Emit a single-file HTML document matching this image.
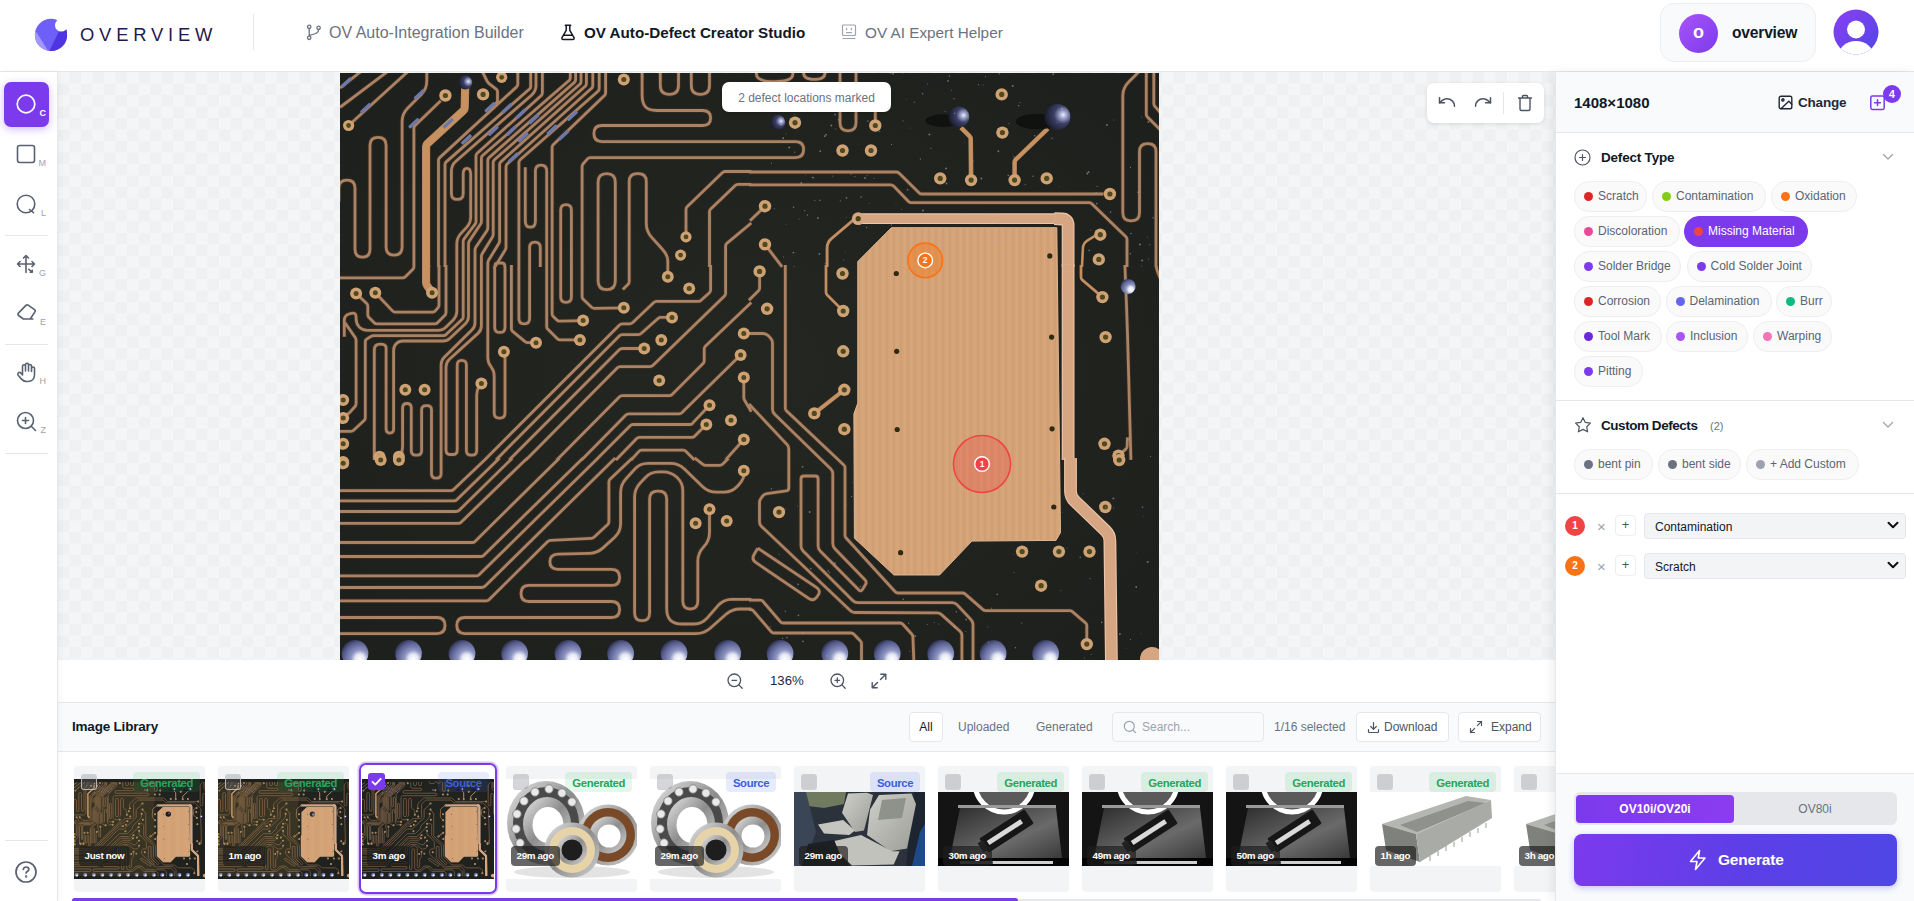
<!DOCTYPE html>
<html lang="en">
<head>
<meta charset="utf-8">
<title>OV Auto-Defect Creator Studio</title>
<style>
*{box-sizing:border-box;margin:0;padding:0}
html,body{width:1914px;height:901px;overflow:hidden;background:#fff;font-family:"Liberation Sans",sans-serif;color:#111827}
.abs{position:absolute}
#app{position:relative;width:1914px;height:901px;overflow:hidden}
/* header */
#hdr{position:absolute;left:0;top:0;width:1914px;height:72px;background:#fff;border-bottom:1px solid #e5e7eb}
.brand{position:absolute;left:80px;top:21px;font-size:18.4px;letter-spacing:4.8px;color:#1e1b4b;font-weight:400;line-height:28px}
.vdiv{position:absolute;left:253px;top:14px;width:1px;height:36px;background:#e5e7eb}
.nav{position:absolute;top:23px;font-size:15.5px;line-height:20px;color:#6b7280;white-space:nowrap}
.nav.act{color:#111827;font-weight:700}
.userpill{position:absolute;left:1660px;top:3px;width:156px;height:59px;border:1px solid #eceef2;border-radius:14px;background:#f9fafb}
.userpill .av{position:absolute;left:18px;top:10px;width:39px;height:39px;border-radius:50%;background:linear-gradient(135deg,#a855f7,#7c3aed);color:#fff;font-weight:700;font-size:18px;text-align:center;line-height:37px}
.userpill .nm{position:absolute;left:71px;top:18px;font-size:15.6px;font-weight:700;color:#111827;line-height:22px;letter-spacing:-.2px}
/* sidebar */
#side{position:absolute;left:0;top:72px;width:58px;height:829px;background:#fff;border-right:1px solid #e5e7eb;box-shadow:2px 0 6px rgba(0,0,0,.04);z-index:2}
.tool{position:absolute;left:4px;width:45px;height:45px;border-radius:7px}
.tool.on{background:#7c3aed;box-shadow:0 2px 8px rgba(124,58,237,.35)}
.tool svg{position:absolute;left:11px;top:11px}
.tool i{position:absolute;font-style:normal;font-size:9px;color:#9ca3af;right:3px;top:26px;line-height:10px}
.tool.on i{color:#fff;font-weight:700}
.sdiv{position:absolute;left:5px;width:43px;height:1px;background:#e5e7eb}
/* canvas */
#canvas{position:absolute;left:58px;top:72px;width:1497px;height:588px;overflow:hidden;background-color:#f4f5f7;
background-image:linear-gradient(45deg,#eff0f2 25%,transparent 25%,transparent 75%,#eff0f2 75%),linear-gradient(45deg,#eff0f2 25%,transparent 25%,transparent 75%,#eff0f2 75%);
background-size:23px 23px;background-position:0 0,11.5px 11.5px}
#pcb{position:absolute;left:282px;top:1px;width:819px;height:587px;display:block}
.note{position:absolute;left:664px;top:10px;width:169px;height:30px;background:#fff;border-radius:7px;font-size:12px;line-height:32px;text-align:center;color:#6b7280;box-shadow:0 1px 3px rgba(0,0,0,.15)}
.hist{position:absolute;left:1369px;top:11px;width:117px;height:40px;background:#fff;border-radius:7px;box-shadow:0 1px 4px rgba(0,0,0,.12)}
/* zoom bar */
#zbar{position:absolute;left:58px;top:660px;width:1497px;height:43px;background:#fff;border-bottom:1px solid #e5e7eb}
/* library */
#libh{position:absolute;left:58px;top:703px;width:1497px;height:49px;background:#f8fafc;border-bottom:1px solid #e5e7eb}
#lib{position:absolute;left:58px;top:752px;width:1497px;height:149px;background:#fff;overflow:hidden}
.lbtn{position:absolute;top:9px;height:30px;border:1px solid #e5e7eb;border-radius:4px;background:#fff;font-size:12px;line-height:28px;color:#4b5563;white-space:nowrap}
.ltxt{position:absolute;top:9px;font-size:12px;line-height:30px;color:#6b7280;white-space:nowrap}
.card{position:absolute;top:14px;width:131.5px;height:126px;background:#f3f4f6;border-radius:4px;overflow:hidden}
.card.cur{background:#fff;border-radius:5px;overflow:visible}
.card .im{position:absolute;left:0;width:132px;overflow:hidden;display:block}
.card .cb{position:absolute;left:7px;top:8px;width:16px;height:16px;border-radius:3px;background:rgba(120,120,125,.3);border:1.5px solid rgba(205,207,212,.8)}
.card .cb.on{background:#7c3aed;border:0;width:17px;height:17px;left:6px;top:7px}
.card .tag{position:absolute;right:5px;top:6px;height:20px;padding:0 7px;border-radius:4px;font-size:11.3px;line-height:22.5px;font-weight:700;letter-spacing:-.35px}
.tag.g{background:rgba(34,197,94,.12);color:#25a55e}
.tag.s{background:rgba(79,110,246,.14);color:#3b5fdb}
.card .tm{position:absolute;left:5px;top:80px;height:20px;padding:0 6px;border-radius:4px;background:rgba(30,30,30,.68);color:#fff;font-size:9.8px;font-weight:700;line-height:20px;white-space:nowrap;letter-spacing:-.35px}
.ring{position:absolute;left:-3px;top:-3px;right:-3px;bottom:-2px;border:2px solid #7c3aed;border-radius:7px;box-shadow:0 0 0 1.5px rgba(124,58,237,.3)}
/* right panel */
#rp{position:absolute;left:1555px;top:72px;width:359px;height:829px;background:#fff;border-left:1px solid #e5e7eb;box-shadow:-3px 0 10px rgba(0,0,0,.07)}
#rph{position:absolute;left:0;top:0;width:358px;height:61px;background:#f8fafc;border-bottom:1px solid #e5e7eb}
.chip{position:absolute;height:31px;border:1px solid #eceef1;border-radius:15px;background:#fafafa;font-size:12px;line-height:29.5px;color:#5b6472;white-space:nowrap;padding-left:23px}
.chip b{position:absolute;left:9px;top:10px;width:9px;height:9px;border-radius:50%}
.chip.on{background:#7c3aed;border-color:#7c3aed;color:#fff}
.sect{position:absolute;left:45px;font-size:13.5px;font-weight:700;color:#111827;line-height:18px;white-space:nowrap;letter-spacing:-.2px}
.hline{position:absolute;left:0;width:358px;height:1px;background:#e5e7eb}
.sel{position:absolute;left:88px;width:262px;height:26px;border:1px solid #e5e7eb;border-radius:4px;background:#f3f4f6;font-size:12px;line-height:26px;padding-left:10px;color:#111827}
.num{position:absolute;left:9px;width:20px;height:20px;border-radius:50%;color:#fff;font-size:10px;font-weight:700;text-align:center;line-height:20px}
.xx{position:absolute;left:41px;font-size:15px;color:#9ca3af;line-height:14px}
.pl{position:absolute;left:59px;width:21px;height:21px;border:1px solid #eceef2;border-radius:4px;background:#fff;color:#4b5563;font-size:13px;text-align:center;line-height:18px;margin-top:-1px}
#rpf{position:absolute;left:0;top:701px;width:358px;height:128px;background:#f8fafc;border-top:1px solid #e5e7eb}
</style>
</head>
<body>
<div id="app">
<div id="hdr">
  <svg class="abs" style="left:33px;top:16px" width="38" height="38" viewBox="0 0 38 38">
    <defs><clipPath id="lgc"><circle cx="18" cy="18.900" r="16.100"/></clipPath></defs>
    <g clip-path="url(#lgc)">
      <rect x="0" y="0" width="38" height="38" fill="#6f5ff9"/>
      <polygon points="26.3,14.5 40,10 40,40 14.1,39.500" fill="#4f35e2"/>
      <polygon points="-2,7.500 1.700,13.400 17.300,38.300 -2,40" fill="#a297fc"/>
    </g>
    <circle cx="28.300" cy="9.200" r="6.300" fill="#fff"/>
    <path d="M28.300 9.200L40 -2.500" stroke="#fff" stroke-width="12.600"/>
  </svg>
  <div class="brand">OVERVIEW</div>
  <div class="vdiv"></div>
  <svg class="abs" style="left:306px;top:24px" width="16" height="17" viewBox="0 0 16 17" fill="none" stroke="#6b7280" stroke-width="1.3" stroke-linecap="round"><circle cx="3.2" cy="2.8" r="1.7"/><circle cx="3.2" cy="13.8" r="1.7"/><circle cx="12.6" cy="3.8" r="1.7"/><path d="M3.2 4.5v7.6M12.6 5.5c0 3.6-3 4.2-9.4 6"/></svg>
  <div class="nav" id="n1" style="left:329px;font-size:16px">OV Auto-Integration Builder</div>
  <svg class="abs" style="left:560px;top:24px" width="16" height="17" viewBox="0 0 16 17" fill="none" stroke="#111827" stroke-width="1.5" stroke-linecap="round" stroke-linejoin="round"><path d="M5.3 1.3h5.4M6.2 1.3v5L2 13.6c-.5.9.1 2 1.200 2h9.600c1.100 0 1.700-1.100 1.200-2L9.800 6.300v-5M4 11.300h8"/></svg>
  <div class="nav act" id="n2" style="left:584px;font-size:15.2px">OV Auto-Defect Creator Studio</div>
  <svg class="abs" style="left:841px;top:24px" width="16" height="16" viewBox="0 0 16 16" fill="none" stroke="#9ca3af" stroke-width="1.2" stroke-linecap="round"><rect x="1.500" y="1" width="13" height="10.500" rx="1"/><path d="M2 14.500h12M5.600 4.300v1.400M10.400 4.300v1.400M5.500 8.600h5"/></svg>
  <div class="nav" id="n3" style="left:865px;font-size:15.3px">OV AI Expert Helper</div>
  <div class="userpill"><div class="av">o</div><div class="nm" id="unm">overview</div></div>
  <svg class="abs" style="left:1833px;top:9px" width="46" height="46" viewBox="0 0 46 46">
    <defs><linearGradient id="pg" x1="0" y1="0" x2="1" y2="1"><stop offset="0" stop-color="#8b3ff5"/><stop offset="1" stop-color="#4f46e5"/></linearGradient><clipPath id="pc"><circle cx="23" cy="23" r="22.500"/></clipPath></defs>
    <circle cx="23" cy="23" r="22.500" fill="url(#pg)"/>
    <g clip-path="url(#pc)"><circle cx="23" cy="20.500" r="9" fill="#fff"/><ellipse cx="23" cy="46" rx="17" ry="14" fill="#fff"/></g>
  </svg>
</div>

<div id="side">
  <div class="tool on" style="top:10px"><svg width="24" height="24" viewBox="0 0 24 24" fill="none" stroke="#fff" stroke-width="1.700"><circle cx="11" cy="11" r="8.800"/></svg><i>C</i></div>
  <div class="tool" style="top:60px"><svg width="24" height="24" viewBox="0 0 24 24" fill="none" stroke="#596170" stroke-width="1.600"><rect x="2.500" y="2.500" width="17" height="17" rx="2.200"/></svg><i>M</i></div>
  <div class="tool" style="top:110px"><svg width="24" height="24" viewBox="0 0 24 24" fill="none" stroke="#596170" stroke-width="1.600" stroke-linecap="round"><circle cx="11" cy="11" r="8.800"/><path d="M14.500 16.500l4 3.200"/></svg><i>L</i></div>
  <div class="sdiv" style="top:163px"></div>
  <div class="tool" style="top:170px"><svg width="24" height="24" viewBox="0 0 24 24" fill="none" stroke="#596170" stroke-width="1.600" stroke-linecap="round" stroke-linejoin="round"><path d="M11 2.500v17M2.500 11h17M8.500 5l2.500-2.500L13.500 5M5 8.500L2.500 11 5 13.500M17 8.500l2.500 2.500-2.500 2.500M13.800 16.300l3.200 2.700M17.300 17.300v2h-2"/></svg><i>G</i></div>
  <div class="tool" style="top:219px"><svg width="24" height="24" viewBox="0 0 24 24" fill="none" stroke="#596170" stroke-width="1.600" stroke-linecap="round" stroke-linejoin="round"><path d="M13.200 3.200l6.300 4.500c.8.600.9 1.600.3 2.400l-4.600 6.900H8.400l-4.800-3.500c-.8-.6-.9-1.700-.2-2.400l7.500-7.700c.6-.6 1.600-.700 2.300-.2zM8.400 17h9.500"/></svg><i>E</i></div>
  <div class="sdiv" style="top:272px"></div>
  <div class="tool" style="top:278px"><svg width="24" height="24" viewBox="0 0 24 24" fill="none" stroke="#596170" stroke-width="1.600" stroke-linecap="round" stroke-linejoin="round"><path d="M7.500 11V5.200a1.500 1.500 0 013 0V10M10.500 9.500V3.700a1.500 1.500 0 013 0V10M13.500 10V5a1.500 1.500 0 013 0v5.500M16.500 10.500V7.500a1.500 1.500 0 013 0v6.300c0 4-2.700 6.700-6.500 6.700h-1.300c-2.300 0-3.800-.8-5.200-2.400l-3.300-3.900c-.6-.8-.5-1.800.2-2.400.7-.6 1.700-.5 2.400.2L7.500 14V9.500"/></svg><i>H</i></div>
  <div class="tool" style="top:327px"><svg width="24" height="24" viewBox="0 0 24 24" fill="none" stroke="#596170" stroke-width="1.600" stroke-linecap="round"><circle cx="10.500" cy="10.500" r="8"/><path d="M16.500 16.500l4 4M10.500 7.500v6M7.500 10.500h6"/></svg><i>Z</i></div>
  <div class="sdiv" style="top:381px"></div>
  <div class="sdiv" style="top:768px"></div>
  <svg class="abs" style="left:14.300px;top:788.200px" width="24" height="24" viewBox="0 0 24 24" fill="none" stroke="#596170" stroke-width="1.700" stroke-linecap="round"><circle cx="12" cy="12" r="10"/><path d="M9.300 9.300c.3-1.500 1.400-2.300 2.800-2.300 1.600 0 2.700 1 2.700 2.400 0 1.900-2.700 2.100-2.700 3.600"/><circle cx="12.100" cy="16.600" r=".4" fill="#596170"/></svg>
</div>

<div id="canvas">
<svg id="pcb" viewBox="0 0 819 587">
<defs><radialGradient id="bl" cx=".68" cy=".7" r=".78"><stop offset="0" stop-color="#ffffff"/><stop offset=".22" stop-color="#e6e8f3"/><stop offset=".42" stop-color="#8f95c3"/><stop offset=".8" stop-color="#545a8b"/><stop offset="1" stop-color="#2a2d47"/></radialGradient>
<radialGradient id="bl2" cx=".72" cy=".42" r=".7"><stop offset="0" stop-color="#eef0fa"/><stop offset=".18" stop-color="#a3a9d0"/><stop offset=".5" stop-color="#3b3f66"/><stop offset="1" stop-color="#1b1d2c"/></radialGradient>
<radialGradient id="bg2" cx=".5" cy=".5" r=".75"><stop offset="0" stop-color="#232621"/><stop offset="1" stop-color="#1d1f1c"/></radialGradient>
<pattern id="st" width="7" height="8" patternUnits="userSpaceOnUse"><rect width="7" height="8" fill="#d4a377"/><rect x="0" width="2" height="8" fill="#d09e72"/><rect x="4" width="1" height="8" fill="#d7a87c"/></pattern></defs>
<g id="pcbsym"><rect y="-21" width="819" height="629" fill="url(#bg2)"/>
<g fill="none" stroke-linecap="butt" stroke-linejoin="round">
<path stroke="#4a3626" stroke-width="4.6" opacity=".55" d="M0.0 15.0L20.4 -1.1M0.0 34.3L47.1 -1.1M8.6 52.5L67.5 -1.1M86.8 -1.1L86.8 8.1 Q86.8 16.1 81.1 21.7L67.8 35.0 Q62.1 40.7 62.1 48.7L62.1 174.1 Q62.1 182.1 54.1 182.1L54.1 182.1 Q46.1 182.1 46.1 174.1L46.1 72.3 Q46.1 64.3 38.1 64.3L38.0 64.3 Q30.0 64.3 30.0 72.3L30.0 176.2 Q30.0 184.2 22.5 184.2L22.5 184.2 Q15.0 184.2 15.0 176.2L15.0 115.1 Q15.0 107.1 7.0 107.1L6.9 107.1 Q-1.1 107.1 -1.1 115.1L-1.1 128.5M100.7 27.8L75.1 52.4 Q73.9 53.6 73.9 55.2L73.9 193.9M289.2 191.9L289.2 208.5 Q289.2 210.1 288.1 211.3L282.8 216.6M142.5 -1.1L147.1 8.2 Q147.8 9.6 149.1 10.6L156.2 16.2 Q157.5 17.1 157.5 18.7L157.5 27.3 Q157.5 28.9 156.3 30.1L150.0 36.4M177.8 -1.1L177.8 11.3 Q177.8 12.9 176.6 13.9L99.7 84.6 Q98.5 85.7 98.5 87.3L98.5 193.9M190.7 -1.1L190.7 13.4 Q190.7 15.0 189.5 16.0L106.2 88.9 Q105.0 90.0 105.0 91.6L105.0 193.9M196.0 -1.1L196.0 12.2 Q196.0 18.2 191.5 22.2L115.9 88.2 Q111.4 92.1 111.4 98.1L111.4 120.4 Q111.4 126.4 117.3 126.4L117.3 126.4 Q123.2 126.4 123.2 120.4L123.2 101.3 Q123.2 95.3 126.9 95.3L126.9 95.3 Q130.7 95.3 130.7 101.3L130.7 144.0 Q130.7 150.0 126.6 154.4L120.8 160.6 Q116.8 165.0 116.8 171.0L116.8 193.9M202.4 -1.1L202.4 19.8 Q202.4 21.4 201.3 22.5L137.2 80.3 Q136.0 81.4 136.0 83.0L136.0 148.4 Q136.0 150.0 135.1 151.2L124.1 165.8 Q123.2 167.1 123.2 168.7L123.2 193.9M230.3 -1.1L230.3 4.8 Q230.3 6.4 229.1 7.5L142.6 82.5 Q141.4 83.5 141.4 85.1L141.4 148.4 Q141.4 150.0 140.5 151.3L129.4 167.9 Q128.5 169.2 128.5 170.8L128.5 193.9M235.6 -1.1L235.6 6.8 Q235.6 8.4 234.4 9.4L149.0 84.6 Q147.8 85.7 147.8 87.3L147.8 154.8 Q147.8 156.4 146.9 157.7L135.8 174.3 Q135.0 175.7 135.0 177.3L135.0 193.9M241.0 -1.1L241.0 8.7 Q241.0 10.3 239.8 11.3L154.4 86.8 Q153.2 87.8 153.2 89.4L153.2 161.2 Q153.2 162.8 152.3 164.2L142.2 180.7 Q141.4 182.1 141.4 183.7L141.4 193.9M246.4 -1.1L246.4 10.6 Q246.4 12.2 245.2 13.3L160.8 88.9 Q159.6 90.0 159.6 91.6L159.6 167.6 Q159.6 169.2 158.8 170.6L148.6 187.2 Q147.8 188.5 147.8 190.1L147.8 193.9M252.8 -1.1L252.8 12.5 Q252.8 14.1 251.6 15.2L167.2 91.0 Q166.0 92.1 166.0 93.7L166.0 174.1 Q166.0 175.7 165.2 177.0L155.1 193.6 Q154.2 194.9 154.2 194.4L154.2 193.9M259.2 -1.1L259.2 15.5 Q259.2 17.1 258.0 18.2L180.1 86.8 Q178.9 87.8 178.9 89.4L178.9 193.9M265.6 -1.1L265.6 19.8 Q265.6 21.4 264.5 22.5L213.2 71.7 Q212.1 72.8 212.1 74.4L212.1 193.9M185.3 94.3L185.3 148.2 Q185.3 154.2 190.3 154.2L190.3 154.2 Q195.4 154.2 195.4 148.2L195.4 98.1 Q195.4 92.1 201.0 92.1L201.0 92.1 Q206.7 92.1 206.7 98.1L206.7 193.9M220.7 193.9L220.7 137.1 Q220.7 131.7 226.0 131.7L226.0 131.7 Q231.4 131.7 231.4 137.1L231.4 193.9M189.6 193.9L189.6 174.6 Q189.6 169.2 194.9 169.2L194.9 169.2 Q200.3 169.2 200.3 174.6L200.3 193.9M302.1 -1.1L302.1 22.0 Q302.1 30.0 305.3 33.7L305.3 33.7 Q308.5 37.5 316.5 37.5L362.6 37.5 Q370.6 37.5 370.6 45.0L370.6 45.0 Q370.6 52.5 362.6 52.5L261.9 52.5 Q253.9 52.5 253.9 60.5L253.9 60.6 Q253.9 68.6 261.9 68.6L411.3 68.6M242.1 193.9L242.1 93.7 Q242.1 92.1 243.1 90.9L247.5 85.8 Q248.5 84.6 250.1 84.6L411.3 84.6M258.1 193.9L258.1 109.3 Q258.1 100.7 266.7 100.7L266.7 100.7 Q275.3 100.7 275.3 109.3L275.3 193.9M289.2 193.9L289.2 108.7 Q289.2 100.7 297.2 100.7L298.3 100.7 Q306.3 100.7 306.3 108.7L306.3 150.5 Q306.3 158.5 311.7 164.4L322.4 176.2 Q327.8 182.1 327.8 188.0L327.8 193.9M411.3 98.5L385.1 98.5 Q383.5 98.5 382.3 99.7L347.1 133.8 Q346.0 135.0 346.0 136.6L346.0 163.9M411.3 111.4L397.9 111.4 Q396.3 111.4 395.2 112.5L370.7 136.0 Q369.5 137.1 369.5 138.7L369.5 193.9M411.3 150.0L386.8 170.4 Q385.6 171.4 385.6 173.0L385.6 193.9M320.3 -1.1L320.3 12.3 Q320.3 21.4 329.4 21.4L329.4 21.4 Q338.5 21.4 338.5 12.3L338.5 -1.1M351.3 -1.1L351.3 12.3 Q351.3 21.4 360.4 21.4L360.4 21.4 Q369.5 21.4 369.5 12.3L369.5 -1.1M535.3 52.5L535.3 38.6M425.0 133.2L410.0 147.8M425.0 171.4L442.1 193.9M408.9 68.6L455.6 68.6 Q463.6 68.6 463.6 76.6L463.6 76.6 Q463.6 84.6 455.6 84.6L408.9 84.6M408.9 99.0L556.2 99.0 Q557.8 99.0 559.0 100.1L579.2 119.9 Q580.3 121.0 581.9 121.0L763.5 121.0M408.9 111.8L550.9 111.8 Q552.5 111.8 553.6 113.0L568.5 128.5 Q569.6 129.6 571.2 129.6L749.0 129.6 Q750.6 129.6 751.8 130.7L785.9 163.8 Q787.0 165.0 787.0 166.6L787.0 193.9M500.0 -1.1L500.0 49.8 Q500.0 57.8 508.0 57.8L508.0 57.8 Q516.0 57.8 516.0 49.8L516.0 -1.1M416.4 -6.4L416.4 1.1 Q416.4 8.6 434.6 8.6L434.6 8.6 Q452.8 8.6 452.8 1.1L452.8 -6.4M463.6 -6.4L463.6 0.0 Q463.6 6.4 474.3 6.4L474.3 6.4 Q485.0 6.4 485.0 0.0L485.0 -6.4M798.8 -1.1L788.4 9.3 Q782.8 15.0 782.8 23.0L782.8 139.8 Q782.8 147.8 790.8 147.8L791.5 147.8 Q799.5 147.8 799.5 139.8L799.5 78.7 Q799.5 70.7 807.5 70.7L808.0 70.7 Q816.0 70.7 816.0 78.7L816.0 193.9M806.3 -1.1L806.3 41.2 Q806.3 42.8 807.4 44.0L821.3 57.8M813.8 -1.1L813.8 30.5 Q813.8 32.1 814.9 33.3L821.3 40.7M35.3 219.8L52.5 237.9 Q53.6 239.1 55.2 239.1L92.7 239.1 Q94.3 239.1 95.3 237.9L97.9 234.9 Q99.0 233.7 99.0 232.1L99.0 191.9M16.1 220.4L26.7 230.5 Q27.8 231.6 27.8 233.2L27.8 241.7 Q27.8 243.3 29.0 244.5L34.2 249.7 Q35.3 250.8 36.9 250.8L94.8 250.8 Q96.4 250.8 97.5 249.7L104.9 242.3 Q106.0 241.2 106.0 239.6L106.0 191.9M4.3 263.7L4.3 247.3 Q4.3 242.3 9.1 241.0L11.2 240.4 Q16.1 239.1 16.1 244.1L16.1 245.8 Q16.1 250.8 19.3 254.1L19.3 254.1 Q22.5 257.3 27.5 257.3L97.8 257.3 Q102.8 257.3 106.4 253.7L113.2 246.9 Q116.8 243.3 116.8 238.3L116.8 191.9M-1.1 358.4L10.8 358.4 Q12.4 358.4 13.6 357.3L24.1 347.5 Q25.3 346.4 25.3 344.8L25.3 268.5 Q25.3 266.9 26.6 266.1L30.8 263.5 Q32.1 262.6 33.7 262.6L103.4 262.6 Q105.0 262.6 106.1 261.5L122.0 246.6 Q123.2 245.5 123.2 243.9L123.2 191.9M73.9 191.9L73.9 193.5 Q73.9 195.1 72.8 196.3L65.4 203.7 Q64.3 204.8 62.7 204.8L-1.1 204.8M46.1 274.4L46.1 356.1 Q46.1 360.1 49.8 360.1L49.8 360.1 Q53.6 360.1 53.6 356.1L53.6 277.3 Q53.6 273.3 56.2 270.7L56.2 270.7 Q58.9 268.0 62.9 268.0L103.1 268.0 Q107.1 268.0 110.0 265.2L125.6 250.4 Q128.5 247.6 128.5 243.6L128.5 191.9M34.3 386.9L34.3 277.2 Q34.3 271.2 40.2 271.2L40.2 271.2 Q46.1 271.2 46.1 274.9L46.1 278.7M59.1 385.6L60.8 381.6 Q62.6 377.7 62.6 373.3L62.6 334.9 Q62.6 330.5 66.9 330.5L66.9 330.5 Q71.3 330.5 71.3 334.9L71.3 377.8 Q71.3 382.2 75.7 382.2L77.2 382.2 Q81.6 382.2 81.6 377.8L81.6 337.1 Q81.6 332.7 86.0 332.7L87.1 332.7 Q91.5 332.7 91.5 337.1L91.5 400.7 Q91.5 405.1 95.9 405.1L96.7 405.1 Q101.1 405.1 101.1 400.7L101.1 291.7 Q101.1 287.3 104.3 284.2L131.8 257.1 Q135.0 254.1 135.0 249.7L135.0 191.9M141.4 191.9L141.4 252.7 Q141.4 257.3 138.0 260.4L109.4 286.3 Q106.0 289.4 106.0 294.0L106.0 376.9 Q106.0 381.5 110.6 381.5L112.6 381.5 Q117.2 381.5 117.2 376.9L117.2 291.9 Q117.2 287.3 121.8 287.3L121.8 287.3 Q126.4 287.3 126.4 291.9L126.4 377.6 Q126.4 382.2 131.0 382.2L132.1 382.2 Q136.7 382.2 136.7 377.6L136.7 321.9 Q136.7 317.3 139.0 313.8L141.4 310.4M4.3 248.7L15.2 264.5 Q16.1 265.8 16.1 267.4L16.1 330.6 Q16.1 332.2 15.0 333.5L9.6 339.6 Q8.6 340.8 7.0 341.2L-1.1 343.0M147.8 191.9L147.8 284.4 Q147.8 289.4 150.8 293.4L151.2 294.0 Q154.2 298.0 154.2 303.0L154.2 340.1 Q154.2 345.1 159.2 345.1L160.0 345.1 Q165.0 345.1 165.0 340.1L165.0 278.7M159.6 190.0L157.1 190.0 Q154.7 190.0 154.7 195.0L154.7 254.4 Q154.7 259.4 159.7 259.4L160.0 259.4 Q165.0 259.4 165.0 254.4L165.0 195.0 Q165.0 190.0 162.3 190.0L159.6 190.0M171.4 191.9L171.4 255.7 Q171.4 257.3 172.6 258.3L185.1 268.7 Q186.4 269.7 188.0 269.7L196.0 269.7M178.9 191.9L178.9 245.5 Q178.9 250.8 184.2 250.8L184.2 250.8 Q189.6 250.8 189.6 245.5L189.6 191.9M206.7 191.9L206.7 253.5 Q206.7 255.1 207.9 256.3L217.4 265.8 Q218.5 266.9 220.1 266.9L239.9 266.9M212.1 191.9L212.1 240.7 Q212.1 242.3 213.2 243.4L216.9 247.1 Q218.1 248.3 219.7 248.2L243.1 247.6M220.7 191.9L220.7 224.1 Q220.7 229.4 226.0 229.4L226.0 229.4 Q231.4 229.4 231.4 224.1L231.4 191.9M242.1 191.9L242.1 223.5 Q242.1 225.1 243.2 226.2L251.6 234.3 Q252.8 235.4 254.4 235.4L283.8 234.8M258.1 191.9L258.1 208.0 Q258.1 216.6 266.7 216.6L266.7 216.6 Q275.3 216.6 275.3 208.0L275.3 191.9M327.8 203.7L327.8 191.9M370.6 191.9L370.6 217.1 Q370.6 218.7 369.4 219.8L361.1 227.3 Q359.9 228.3 358.3 228.3L316.5 228.3 Q314.9 228.3 313.8 229.5L292.5 249.7 Q291.3 250.8 289.7 250.8L282.2 250.8 Q280.6 250.8 279.5 252.0L144.6 386.9M332.0 244.4L320.8 244.4 Q319.2 244.4 318.0 245.5L301.1 260.5 Q299.9 261.6 298.3 261.6L282.2 261.6 Q280.6 261.6 279.5 262.7L156.0 386.9M304.2 275.5L282.2 275.5 Q280.6 275.5 279.5 276.6L169.2 386.9M385.6 191.9L385.6 220.3 Q385.6 221.9 384.5 223.0L312.8 292.6 Q311.7 293.7 310.1 293.7L280.1 293.7 Q278.5 293.7 277.4 294.8L185.9 386.9M411.3 229.4L365.3 273.3 Q364.2 274.4 364.2 276.0L364.2 287.8 Q364.2 289.4 363.1 290.5L332.1 321.5 Q331.0 322.6 329.4 322.6L282.2 322.6 Q280.6 322.6 279.5 323.7L216.8 386.9M400.6 281.9L341.8 339.7 Q340.6 340.8 339.0 340.8L288.7 340.8 Q287.1 340.8 285.9 342.0L241.6 386.9M369.5 332.2L352.4 350.4 Q351.3 351.5 349.7 351.5L292.9 351.5 Q291.3 351.5 290.2 352.7L256.0 386.9M366.3 351.5L354.6 363.2 Q353.5 364.4 351.9 364.4L299.4 364.4 Q297.8 364.4 296.7 365.5L275.9 386.9M291.3 386.9L298.9 378.4 Q299.9 377.2 301.5 377.2L343.3 377.2 Q344.9 377.2 346.0 378.4L354.5 386.9M403.8 304.4L403.8 324.2 Q403.8 325.8 404.6 327.2L411.3 338.7M403.8 366.5L385.6 386.9M419.6 198.4L419.6 215.0 Q419.6 216.6 418.5 217.7L408.9 227.3M445.3 192.0L445.3 335.2 Q445.3 336.8 446.5 337.9L503.8 391.9 Q505.0 393.0 505.0 394.6L505.0 462.2 Q505.0 463.8 506.1 465.0L555.2 518.8 Q556.3 520.0 557.9 520.0L622.5 520.0 Q624.1 520.0 625.3 521.1L643.0 536.6 Q644.2 537.7 645.8 537.7L729.6 537.7 Q731.2 537.7 732.4 538.7L745.6 550.0 Q746.8 551.0 746.8 552.6L746.8 571.0M409.0 260.5L423.0 260.5 Q426.0 260.5 428.1 262.6L430.4 264.9 Q432.5 267.0 432.5 270.0L432.5 336.2 Q432.5 339.2 434.7 341.3L490.6 395.7 Q492.8 397.8 492.8 400.8L492.8 470.5 Q492.8 473.5 494.9 475.7L524.9 506.8 Q527.0 509.0 525.5 511.6L522.5 516.4 Q521.0 519.0 518.9 516.9L480.2 478.1 Q478.1 476.0 478.1 473.0L478.1 406.0 Q478.1 403.0 475.1 403.0L464.0 403.0 Q461.0 403.0 461.0 406.0L461.0 473.0 Q461.0 476.0 463.1 478.1L512.7 527.6 Q514.8 529.7 517.8 529.7L612.2 529.7 Q615.2 529.7 617.2 531.9L631.0 546.6 Q633.0 548.8 633.0 551.8L633.0 590.0M409.0 331.0L447.1 371.6 Q448.8 373.4 448.8 375.9L448.8 414.9 Q448.8 417.4 446.3 417.8L426.9 420.6 Q424.4 421.0 422.8 422.9L421.1 425.2 Q419.5 427.1 419.5 429.6L419.5 449.0 Q419.5 451.5 421.3 453.2L510.5 537.8 Q512.3 539.5 514.8 539.5L597.1 539.9 Q599.6 539.9 601.5 541.6L620.0 558.3 Q621.9 560.0 621.9 562.5L621.9 590.0M409.0 527.2L420.4 527.2 Q422.0 527.2 423.0 528.4L440.5 548.8 Q441.5 550.0 443.1 550.0L560.1 550.0 Q561.7 550.0 562.8 551.2L571.7 561.0 Q572.8 562.2 572.9 563.8L573.9 590.0M409.0 536.5L410.6 536.5 Q412.2 536.5 413.2 537.7L431.3 558.8 Q432.3 560.0 433.9 560.0L511.0 560.0 Q512.6 560.0 513.7 561.1L520.4 567.9 Q521.5 569.0 521.5 570.6L521.5 590.0M784.9 191.9L786.2 224.6 Q787.5 257.3 788.5 297.3L790.9 386.9M816.0 191.9L816.7 195.7 Q817.0 197.3 817.6 198.8L821.3 208.0M778.5 382.6L785.8 376.1 Q787.0 375.1 787.1 373.5L787.5 364.4M-1.1 417.7L110.9 417.7 Q112.5 417.7 113.6 416.6L146.7 384.9M-1.1 427.8L114.1 427.8 Q115.7 427.8 116.8 426.7L159.6 384.9M-1.1 438.5L116.2 438.5 Q117.8 438.5 119.0 437.4L172.5 384.9M-1.1 450.3L118.4 450.3 Q120.0 450.3 121.1 449.2L187.4 384.9M-1.1 469.5L132.3 469.5 Q133.9 469.5 135.0 468.4L219.6 384.9M-1.1 483.5L140.9 483.5 Q142.5 483.5 143.6 482.4L243.1 384.9M-1.1 502.8L136.6 502.8 Q138.2 502.8 139.3 501.6L258.1 384.9M-1.1 514.5L141.9 514.5 Q143.5 514.5 144.7 513.4L275.3 384.9M-1.1 527.8L146.2 527.8 Q147.8 527.8 149.0 526.7L207.7 468.5 Q208.9 467.4 210.5 467.3L251.2 465.3 Q252.8 465.3 254.0 464.2L267.7 451.4 Q268.9 450.3 268.9 448.7L268.9 409.0 Q268.9 407.4 270.0 406.3L292.4 384.9M-1.1 544.5L97.0 544.5 Q105.0 544.5 105.0 552.5L105.0 552.6 Q105.0 560.6 97.0 560.6L-1.1 560.6M411.3 536.0L400.0 536.0 Q392.0 536.0 386.0 541.3L370.2 555.3 Q364.2 560.6 356.2 560.6L124.8 560.6 Q116.8 560.6 116.8 552.6L116.8 552.5 Q116.8 544.5 124.8 544.5L271.6 544.5 Q279.6 544.5 279.6 536.5L279.6 536.5 Q279.6 528.5 271.6 528.5L189.0 528.5 Q181.0 528.5 181.0 520.5L181.0 520.4 Q181.0 512.4 189.0 512.4L271.6 512.4 Q279.6 512.4 279.6 504.4L279.6 504.3 Q279.6 496.3 271.6 496.3L217.9 496.3 Q209.9 496.3 209.9 488.8L209.9 488.8 Q209.9 481.3 217.9 481.1L249.1 480.4 Q257.1 480.3 263.0 474.9L274.7 464.2 Q280.6 458.8 280.6 450.8L280.6 419.7 Q280.6 411.7 286.0 405.8L294.6 396.2 Q299.9 390.3 307.9 390.3L330.5 390.3 Q338.5 390.3 344.2 395.8L362.7 413.7 Q368.5 419.2 376.5 419.2L384.0 419.2 Q392.0 419.2 397.4 413.3L398.4 412.2 Q403.8 406.4 403.8 402.1L403.8 397.8M411.3 526.3L391.5 526.3 Q383.5 526.3 378.2 532.4L367.3 544.9 Q362.0 551.0 354.0 551.0L342.2 551.0 Q334.2 551.0 330.4 547.2L330.4 547.2 Q326.7 543.5 326.7 535.5L326.7 426.1 Q326.7 418.1 318.7 418.1L317.6 418.1 Q309.6 418.1 309.6 426.1L309.6 539.7 Q309.6 547.7 302.1 547.7L302.1 547.7 Q294.6 547.7 294.6 539.7L294.6 424.0 Q294.6 416.0 300.0 410.2L305.2 404.7 Q310.6 398.9 318.6 398.9L323.0 398.9 Q331.0 398.9 336.9 404.2L336.9 404.2 Q342.8 409.6 342.8 417.6L342.8 528.0 Q342.8 536.0 350.3 536.0L350.3 536.0 Q357.8 536.0 357.8 528.0L357.8 488.3 Q357.8 480.3 363.2 474.4L364.1 473.3 Q369.5 467.4 369.5 459.4L369.5 436.3M354.5 384.9L362.9 391.4 Q364.2 392.4 365.8 392.4L379.7 392.4 Q381.3 392.4 382.5 391.3L388.8 384.9M417.8 475.2L476.4 514.3 Q481.4 517.6 477.9 522.5L477.0 523.8 Q473.6 528.8 468.6 525.4L416.1 489.7 Q411.1 486.4 414.2 481.2L417.8 475.2"/>
<path stroke="#ab8263" stroke-width="2.8" d="M0.0 15.0L20.4 -1.1M0.0 34.3L47.1 -1.1M8.6 52.5L67.5 -1.1M86.8 -1.1L86.8 8.1 Q86.8 16.1 81.1 21.7L67.8 35.0 Q62.1 40.7 62.1 48.7L62.1 174.1 Q62.1 182.1 54.1 182.1L54.1 182.1 Q46.1 182.1 46.1 174.1L46.1 72.3 Q46.1 64.3 38.1 64.3L38.0 64.3 Q30.0 64.3 30.0 72.3L30.0 176.2 Q30.0 184.2 22.5 184.2L22.5 184.2 Q15.0 184.2 15.0 176.2L15.0 115.1 Q15.0 107.1 7.0 107.1L6.9 107.1 Q-1.1 107.1 -1.1 115.1L-1.1 128.5M100.7 27.8L75.1 52.4 Q73.9 53.6 73.9 55.2L73.9 193.9M289.2 191.9L289.2 208.5 Q289.2 210.1 288.1 211.3L282.8 216.6M142.5 -1.1L147.1 8.2 Q147.8 9.6 149.1 10.6L156.2 16.2 Q157.5 17.1 157.5 18.7L157.5 27.3 Q157.5 28.9 156.3 30.1L150.0 36.4M177.8 -1.1L177.8 11.3 Q177.8 12.9 176.6 13.9L99.7 84.6 Q98.5 85.7 98.5 87.3L98.5 193.9M190.7 -1.1L190.7 13.4 Q190.7 15.0 189.5 16.0L106.2 88.9 Q105.0 90.0 105.0 91.6L105.0 193.9M196.0 -1.1L196.0 12.2 Q196.0 18.2 191.5 22.2L115.9 88.2 Q111.4 92.1 111.4 98.1L111.4 120.4 Q111.4 126.4 117.3 126.4L117.3 126.4 Q123.2 126.4 123.2 120.4L123.2 101.3 Q123.2 95.3 126.9 95.3L126.9 95.3 Q130.7 95.3 130.7 101.3L130.7 144.0 Q130.7 150.0 126.6 154.4L120.8 160.6 Q116.8 165.0 116.8 171.0L116.8 193.9M202.4 -1.1L202.4 19.8 Q202.4 21.4 201.3 22.5L137.2 80.3 Q136.0 81.4 136.0 83.0L136.0 148.4 Q136.0 150.0 135.1 151.2L124.1 165.8 Q123.2 167.1 123.2 168.7L123.2 193.9M230.3 -1.1L230.3 4.8 Q230.3 6.4 229.1 7.5L142.6 82.5 Q141.4 83.5 141.4 85.1L141.4 148.4 Q141.4 150.0 140.5 151.3L129.4 167.9 Q128.5 169.2 128.5 170.8L128.5 193.9M235.6 -1.1L235.6 6.8 Q235.6 8.4 234.4 9.4L149.0 84.6 Q147.8 85.7 147.8 87.3L147.8 154.8 Q147.8 156.4 146.9 157.7L135.8 174.3 Q135.0 175.7 135.0 177.3L135.0 193.9M241.0 -1.1L241.0 8.7 Q241.0 10.3 239.8 11.3L154.4 86.8 Q153.2 87.8 153.2 89.4L153.2 161.2 Q153.2 162.8 152.3 164.2L142.2 180.7 Q141.4 182.1 141.4 183.7L141.4 193.9M246.4 -1.1L246.4 10.6 Q246.4 12.2 245.2 13.3L160.8 88.9 Q159.6 90.0 159.6 91.6L159.6 167.6 Q159.6 169.2 158.8 170.6L148.6 187.2 Q147.8 188.5 147.8 190.1L147.8 193.9M252.8 -1.1L252.8 12.5 Q252.8 14.1 251.6 15.2L167.2 91.0 Q166.0 92.1 166.0 93.7L166.0 174.1 Q166.0 175.7 165.2 177.0L155.1 193.6 Q154.2 194.9 154.2 194.4L154.2 193.9M259.2 -1.1L259.2 15.5 Q259.2 17.1 258.0 18.2L180.1 86.8 Q178.9 87.8 178.9 89.4L178.9 193.9M265.6 -1.1L265.6 19.8 Q265.6 21.4 264.5 22.5L213.2 71.7 Q212.1 72.8 212.1 74.4L212.1 193.9M185.3 94.3L185.3 148.2 Q185.3 154.2 190.3 154.2L190.3 154.2 Q195.4 154.2 195.4 148.2L195.4 98.1 Q195.4 92.1 201.0 92.1L201.0 92.1 Q206.7 92.1 206.7 98.1L206.7 193.9M220.7 193.9L220.7 137.1 Q220.7 131.7 226.0 131.7L226.0 131.7 Q231.4 131.7 231.4 137.1L231.4 193.9M189.6 193.9L189.6 174.6 Q189.6 169.2 194.9 169.2L194.9 169.2 Q200.3 169.2 200.3 174.6L200.3 193.9M302.1 -1.1L302.1 22.0 Q302.1 30.0 305.3 33.7L305.3 33.7 Q308.5 37.5 316.5 37.5L362.6 37.5 Q370.6 37.5 370.6 45.0L370.6 45.0 Q370.6 52.5 362.6 52.5L261.9 52.5 Q253.9 52.5 253.9 60.5L253.9 60.6 Q253.9 68.6 261.9 68.6L411.3 68.6M242.1 193.9L242.1 93.7 Q242.1 92.1 243.1 90.9L247.5 85.8 Q248.5 84.6 250.1 84.6L411.3 84.6M258.1 193.9L258.1 109.3 Q258.1 100.7 266.7 100.7L266.7 100.7 Q275.3 100.7 275.3 109.3L275.3 193.9M289.2 193.9L289.2 108.7 Q289.2 100.7 297.2 100.7L298.3 100.7 Q306.3 100.7 306.3 108.7L306.3 150.5 Q306.3 158.5 311.7 164.4L322.4 176.2 Q327.8 182.1 327.8 188.0L327.8 193.9M411.3 98.5L385.1 98.5 Q383.5 98.5 382.3 99.7L347.1 133.8 Q346.0 135.0 346.0 136.6L346.0 163.9M411.3 111.4L397.9 111.4 Q396.3 111.4 395.2 112.5L370.7 136.0 Q369.5 137.1 369.5 138.7L369.5 193.9M411.3 150.0L386.8 170.4 Q385.6 171.4 385.6 173.0L385.6 193.9M320.3 -1.1L320.3 12.3 Q320.3 21.4 329.4 21.4L329.4 21.4 Q338.5 21.4 338.5 12.3L338.5 -1.1M351.3 -1.1L351.3 12.3 Q351.3 21.4 360.4 21.4L360.4 21.4 Q369.5 21.4 369.5 12.3L369.5 -1.1M535.3 52.5L535.3 38.6M425.0 133.2L410.0 147.8M425.0 171.4L442.1 193.9M408.9 68.6L455.6 68.6 Q463.6 68.6 463.6 76.6L463.6 76.6 Q463.6 84.6 455.6 84.6L408.9 84.6M408.9 99.0L556.2 99.0 Q557.8 99.0 559.0 100.1L579.2 119.9 Q580.3 121.0 581.9 121.0L763.5 121.0M408.9 111.8L550.9 111.8 Q552.5 111.8 553.6 113.0L568.5 128.5 Q569.6 129.6 571.2 129.6L749.0 129.6 Q750.6 129.6 751.8 130.7L785.9 163.8 Q787.0 165.0 787.0 166.6L787.0 193.9M500.0 -1.1L500.0 49.8 Q500.0 57.8 508.0 57.8L508.0 57.8 Q516.0 57.8 516.0 49.8L516.0 -1.1M416.4 -6.4L416.4 1.1 Q416.4 8.6 434.6 8.6L434.6 8.6 Q452.8 8.6 452.8 1.1L452.8 -6.4M463.6 -6.4L463.6 0.0 Q463.6 6.4 474.3 6.4L474.3 6.4 Q485.0 6.4 485.0 0.0L485.0 -6.4M798.8 -1.1L788.4 9.3 Q782.8 15.0 782.8 23.0L782.8 139.8 Q782.8 147.8 790.8 147.8L791.5 147.8 Q799.5 147.8 799.5 139.8L799.5 78.7 Q799.5 70.7 807.5 70.7L808.0 70.7 Q816.0 70.7 816.0 78.7L816.0 193.9M806.3 -1.1L806.3 41.2 Q806.3 42.8 807.4 44.0L821.3 57.8M813.8 -1.1L813.8 30.5 Q813.8 32.1 814.9 33.3L821.3 40.7M35.3 219.8L52.5 237.9 Q53.6 239.1 55.2 239.1L92.7 239.1 Q94.3 239.1 95.3 237.9L97.9 234.9 Q99.0 233.7 99.0 232.1L99.0 191.9M16.1 220.4L26.7 230.5 Q27.8 231.6 27.8 233.2L27.8 241.7 Q27.8 243.3 29.0 244.5L34.2 249.7 Q35.3 250.8 36.9 250.8L94.8 250.8 Q96.4 250.8 97.5 249.7L104.9 242.3 Q106.0 241.2 106.0 239.6L106.0 191.9M4.3 263.7L4.3 247.3 Q4.3 242.3 9.1 241.0L11.2 240.4 Q16.1 239.1 16.1 244.1L16.1 245.8 Q16.1 250.8 19.3 254.1L19.3 254.1 Q22.5 257.3 27.5 257.3L97.8 257.3 Q102.8 257.3 106.4 253.7L113.2 246.9 Q116.8 243.3 116.8 238.3L116.8 191.9M-1.1 358.4L10.8 358.4 Q12.4 358.4 13.6 357.3L24.1 347.5 Q25.3 346.4 25.3 344.8L25.3 268.5 Q25.3 266.9 26.6 266.1L30.8 263.5 Q32.1 262.6 33.7 262.6L103.4 262.6 Q105.0 262.6 106.1 261.5L122.0 246.6 Q123.2 245.5 123.2 243.9L123.2 191.9M73.9 191.9L73.9 193.5 Q73.9 195.1 72.8 196.3L65.4 203.7 Q64.3 204.8 62.7 204.8L-1.1 204.8M46.1 274.4L46.1 356.1 Q46.1 360.1 49.8 360.1L49.8 360.1 Q53.6 360.1 53.6 356.1L53.6 277.3 Q53.6 273.3 56.2 270.7L56.2 270.7 Q58.9 268.0 62.9 268.0L103.1 268.0 Q107.1 268.0 110.0 265.2L125.6 250.4 Q128.5 247.6 128.5 243.6L128.5 191.9M34.3 386.9L34.3 277.2 Q34.3 271.2 40.2 271.2L40.2 271.2 Q46.1 271.2 46.1 274.9L46.1 278.7M59.1 385.6L60.8 381.6 Q62.6 377.7 62.6 373.3L62.6 334.9 Q62.6 330.5 66.9 330.5L66.9 330.5 Q71.3 330.5 71.3 334.9L71.3 377.8 Q71.3 382.2 75.7 382.2L77.2 382.2 Q81.6 382.2 81.6 377.8L81.6 337.1 Q81.6 332.7 86.0 332.7L87.1 332.7 Q91.5 332.7 91.5 337.1L91.5 400.7 Q91.5 405.1 95.9 405.1L96.7 405.1 Q101.1 405.1 101.1 400.7L101.1 291.7 Q101.1 287.3 104.3 284.2L131.8 257.1 Q135.0 254.1 135.0 249.7L135.0 191.9M141.4 191.9L141.4 252.7 Q141.4 257.3 138.0 260.4L109.4 286.3 Q106.0 289.4 106.0 294.0L106.0 376.9 Q106.0 381.5 110.6 381.5L112.6 381.5 Q117.2 381.5 117.2 376.9L117.2 291.9 Q117.2 287.3 121.8 287.3L121.8 287.3 Q126.4 287.3 126.4 291.9L126.4 377.6 Q126.4 382.2 131.0 382.2L132.1 382.2 Q136.7 382.2 136.7 377.6L136.7 321.9 Q136.7 317.3 139.0 313.8L141.4 310.4M4.3 248.7L15.2 264.5 Q16.1 265.8 16.1 267.4L16.1 330.6 Q16.1 332.2 15.0 333.5L9.6 339.6 Q8.6 340.8 7.0 341.2L-1.1 343.0M147.8 191.9L147.8 284.4 Q147.8 289.4 150.8 293.4L151.2 294.0 Q154.2 298.0 154.2 303.0L154.2 340.1 Q154.2 345.1 159.2 345.1L160.0 345.1 Q165.0 345.1 165.0 340.1L165.0 278.7M159.6 190.0L157.1 190.0 Q154.7 190.0 154.7 195.0L154.7 254.4 Q154.7 259.4 159.7 259.4L160.0 259.4 Q165.0 259.4 165.0 254.4L165.0 195.0 Q165.0 190.0 162.3 190.0L159.6 190.0M171.4 191.9L171.4 255.7 Q171.4 257.3 172.6 258.3L185.1 268.7 Q186.4 269.7 188.0 269.7L196.0 269.7M178.9 191.9L178.9 245.5 Q178.9 250.8 184.2 250.8L184.2 250.8 Q189.6 250.8 189.6 245.5L189.6 191.9M206.7 191.9L206.7 253.5 Q206.7 255.1 207.9 256.3L217.4 265.8 Q218.5 266.9 220.1 266.9L239.9 266.9M212.1 191.9L212.1 240.7 Q212.1 242.3 213.2 243.4L216.9 247.1 Q218.1 248.3 219.7 248.2L243.1 247.6M220.7 191.9L220.7 224.1 Q220.7 229.4 226.0 229.4L226.0 229.4 Q231.4 229.4 231.4 224.1L231.4 191.9M242.1 191.9L242.1 223.5 Q242.1 225.1 243.2 226.2L251.6 234.3 Q252.8 235.4 254.4 235.4L283.8 234.8M258.1 191.9L258.1 208.0 Q258.1 216.6 266.7 216.6L266.7 216.6 Q275.3 216.6 275.3 208.0L275.3 191.9M327.8 203.7L327.8 191.9M370.6 191.9L370.6 217.1 Q370.6 218.7 369.4 219.8L361.1 227.3 Q359.9 228.3 358.3 228.3L316.5 228.3 Q314.9 228.3 313.8 229.5L292.5 249.7 Q291.3 250.8 289.7 250.8L282.2 250.8 Q280.6 250.8 279.5 252.0L144.6 386.9M332.0 244.4L320.8 244.4 Q319.2 244.4 318.0 245.5L301.1 260.5 Q299.9 261.6 298.3 261.6L282.2 261.6 Q280.6 261.6 279.5 262.7L156.0 386.9M304.2 275.5L282.2 275.5 Q280.6 275.5 279.5 276.6L169.2 386.9M385.6 191.9L385.6 220.3 Q385.6 221.9 384.5 223.0L312.8 292.6 Q311.7 293.7 310.1 293.7L280.1 293.7 Q278.5 293.7 277.4 294.8L185.9 386.9M411.3 229.4L365.3 273.3 Q364.2 274.4 364.2 276.0L364.2 287.8 Q364.2 289.4 363.1 290.5L332.1 321.5 Q331.0 322.6 329.4 322.6L282.2 322.6 Q280.6 322.6 279.5 323.7L216.8 386.9M400.6 281.9L341.8 339.7 Q340.6 340.8 339.0 340.8L288.7 340.8 Q287.1 340.8 285.9 342.0L241.6 386.9M369.5 332.2L352.4 350.4 Q351.3 351.5 349.7 351.5L292.9 351.5 Q291.3 351.5 290.2 352.7L256.0 386.9M366.3 351.5L354.6 363.2 Q353.5 364.4 351.9 364.4L299.4 364.4 Q297.8 364.4 296.7 365.5L275.9 386.9M291.3 386.9L298.9 378.4 Q299.9 377.2 301.5 377.2L343.3 377.2 Q344.9 377.2 346.0 378.4L354.5 386.9M403.8 304.4L403.8 324.2 Q403.8 325.8 404.6 327.2L411.3 338.7M403.8 366.5L385.6 386.9M419.6 198.4L419.6 215.0 Q419.6 216.6 418.5 217.7L408.9 227.3M445.3 192.0L445.3 335.2 Q445.3 336.8 446.5 337.9L503.8 391.9 Q505.0 393.0 505.0 394.6L505.0 462.2 Q505.0 463.8 506.1 465.0L555.2 518.8 Q556.3 520.0 557.9 520.0L622.5 520.0 Q624.1 520.0 625.3 521.1L643.0 536.6 Q644.2 537.7 645.8 537.7L729.6 537.7 Q731.2 537.7 732.4 538.7L745.6 550.0 Q746.8 551.0 746.8 552.6L746.8 571.0M409.0 260.5L423.0 260.5 Q426.0 260.5 428.1 262.6L430.4 264.9 Q432.5 267.0 432.5 270.0L432.5 336.2 Q432.5 339.2 434.7 341.3L490.6 395.7 Q492.8 397.8 492.8 400.8L492.8 470.5 Q492.8 473.5 494.9 475.7L524.9 506.8 Q527.0 509.0 525.5 511.6L522.5 516.4 Q521.0 519.0 518.9 516.9L480.2 478.1 Q478.1 476.0 478.1 473.0L478.1 406.0 Q478.1 403.0 475.1 403.0L464.0 403.0 Q461.0 403.0 461.0 406.0L461.0 473.0 Q461.0 476.0 463.1 478.1L512.7 527.6 Q514.8 529.7 517.8 529.7L612.2 529.7 Q615.2 529.7 617.2 531.9L631.0 546.6 Q633.0 548.8 633.0 551.8L633.0 590.0M409.0 331.0L447.1 371.6 Q448.8 373.4 448.8 375.9L448.8 414.9 Q448.8 417.4 446.3 417.8L426.9 420.6 Q424.4 421.0 422.8 422.9L421.1 425.2 Q419.5 427.1 419.5 429.6L419.5 449.0 Q419.5 451.5 421.3 453.2L510.5 537.8 Q512.3 539.5 514.8 539.5L597.1 539.9 Q599.6 539.9 601.5 541.6L620.0 558.3 Q621.9 560.0 621.9 562.5L621.9 590.0M409.0 527.2L420.4 527.2 Q422.0 527.2 423.0 528.4L440.5 548.8 Q441.5 550.0 443.1 550.0L560.1 550.0 Q561.7 550.0 562.8 551.2L571.7 561.0 Q572.8 562.2 572.9 563.8L573.9 590.0M409.0 536.5L410.6 536.5 Q412.2 536.5 413.2 537.7L431.3 558.8 Q432.3 560.0 433.9 560.0L511.0 560.0 Q512.6 560.0 513.7 561.1L520.4 567.9 Q521.5 569.0 521.5 570.6L521.5 590.0M784.9 191.9L786.2 224.6 Q787.5 257.3 788.5 297.3L790.9 386.9M816.0 191.9L816.7 195.7 Q817.0 197.3 817.6 198.8L821.3 208.0M778.5 382.6L785.8 376.1 Q787.0 375.1 787.1 373.5L787.5 364.4M-1.1 417.7L110.9 417.7 Q112.5 417.7 113.6 416.6L146.7 384.9M-1.1 427.8L114.1 427.8 Q115.7 427.8 116.8 426.7L159.6 384.9M-1.1 438.5L116.2 438.5 Q117.8 438.5 119.0 437.4L172.5 384.9M-1.1 450.3L118.4 450.3 Q120.0 450.3 121.1 449.2L187.4 384.9M-1.1 469.5L132.3 469.5 Q133.9 469.5 135.0 468.4L219.6 384.9M-1.1 483.5L140.9 483.5 Q142.5 483.5 143.6 482.4L243.1 384.9M-1.1 502.8L136.6 502.8 Q138.2 502.8 139.3 501.6L258.1 384.9M-1.1 514.5L141.9 514.5 Q143.5 514.5 144.7 513.4L275.3 384.9M-1.1 527.8L146.2 527.8 Q147.8 527.8 149.0 526.7L207.7 468.5 Q208.9 467.4 210.5 467.3L251.2 465.3 Q252.8 465.3 254.0 464.2L267.7 451.4 Q268.9 450.3 268.9 448.7L268.9 409.0 Q268.9 407.4 270.0 406.3L292.4 384.9M-1.1 544.5L97.0 544.5 Q105.0 544.5 105.0 552.5L105.0 552.6 Q105.0 560.6 97.0 560.6L-1.1 560.6M411.3 536.0L400.0 536.0 Q392.0 536.0 386.0 541.3L370.2 555.3 Q364.2 560.6 356.2 560.6L124.8 560.6 Q116.8 560.6 116.8 552.6L116.8 552.5 Q116.8 544.5 124.8 544.5L271.6 544.5 Q279.6 544.5 279.6 536.5L279.6 536.5 Q279.6 528.5 271.6 528.5L189.0 528.5 Q181.0 528.5 181.0 520.5L181.0 520.4 Q181.0 512.4 189.0 512.4L271.6 512.4 Q279.6 512.4 279.6 504.4L279.6 504.3 Q279.6 496.3 271.6 496.3L217.9 496.3 Q209.9 496.3 209.9 488.8L209.9 488.8 Q209.9 481.3 217.9 481.1L249.1 480.4 Q257.1 480.3 263.0 474.9L274.7 464.2 Q280.6 458.8 280.6 450.8L280.6 419.7 Q280.6 411.7 286.0 405.8L294.6 396.2 Q299.9 390.3 307.9 390.3L330.5 390.3 Q338.5 390.3 344.2 395.8L362.7 413.7 Q368.5 419.2 376.5 419.2L384.0 419.2 Q392.0 419.2 397.4 413.3L398.4 412.2 Q403.8 406.4 403.8 402.1L403.8 397.8M411.3 526.3L391.5 526.3 Q383.5 526.3 378.2 532.4L367.3 544.9 Q362.0 551.0 354.0 551.0L342.2 551.0 Q334.2 551.0 330.4 547.2L330.4 547.2 Q326.7 543.5 326.7 535.5L326.7 426.1 Q326.7 418.1 318.7 418.1L317.6 418.1 Q309.6 418.1 309.6 426.1L309.6 539.7 Q309.6 547.7 302.1 547.7L302.1 547.7 Q294.6 547.7 294.6 539.7L294.6 424.0 Q294.6 416.0 300.0 410.2L305.2 404.7 Q310.6 398.9 318.6 398.9L323.0 398.9 Q331.0 398.9 336.9 404.2L336.9 404.2 Q342.8 409.6 342.8 417.6L342.8 528.0 Q342.8 536.0 350.3 536.0L350.3 536.0 Q357.8 536.0 357.8 528.0L357.8 488.3 Q357.8 480.3 363.2 474.4L364.1 473.3 Q369.5 467.4 369.5 459.4L369.5 436.3M354.5 384.9L362.9 391.4 Q364.2 392.4 365.8 392.4L379.7 392.4 Q381.3 392.4 382.5 391.3L388.8 384.9M417.8 475.2L476.4 514.3 Q481.4 517.6 477.9 522.5L477.0 523.8 Q473.6 528.8 468.6 525.4L416.1 489.7 Q411.1 486.4 414.2 481.2L417.8 475.2"/>
<path stroke="#b98660" stroke-width="8.2" d="M125.3 9.6L124.7 34.8 Q124.7 36.4 123.5 37.5L87.3 70.7 Q86.1 71.8 86.1 73.4L86.1 193.9"/>
<path stroke="#c7925f" stroke-width="6.6" d="M125.3 9.6L124.7 34.8 Q124.7 36.4 123.5 37.5L87.3 70.7 Q86.1 71.8 86.1 73.4L86.1 193.9"/>
<path stroke="#b98660" stroke-width="4.6" d="M621.0 54.6L629.5 63.1 Q630.7 64.3 630.7 65.9L631.1 102.8"/>
<path stroke="#c7925f" stroke-width="3.0" d="M621.0 54.6L629.5 63.1 Q630.7 64.3 630.7 65.9L631.1 102.8"/>
<path stroke="#b98660" stroke-width="4.6" d="M707.8 55.7L675.7 86.7 Q674.6 87.8 674.6 89.4L674.6 102.8"/>
<path stroke="#c7925f" stroke-width="3.0" d="M707.8 55.7L675.7 86.7 Q674.6 87.8 674.6 89.4L674.6 102.8"/>
<path stroke="#ecc6ab" stroke-width="10.8" d="M518.2 145.7L727.1 145.7"/>
<path stroke="#d6a581" stroke-width="8.6" d="M518.2 145.7L727.1 145.7"/>
<path stroke="#ecc6ab" stroke-width="12.8" d="M714.2 145.7L722.1 146.0 Q728.1 146.3 728.1 152.3L728.1 193.9"/>
<path stroke="#d6a581" stroke-width="10.6" d="M714.2 145.7L722.1 146.0 Q728.1 146.3 728.1 152.3L728.1 193.9"/>
<path stroke="#b98660" stroke-width="3.0" d="M515.0 145.7L491.7 165.4 Q487.1 169.2 487.1 175.2L487.1 193.9"/>
<path stroke="#c7925f" stroke-width="1.4" d="M515.0 145.7L491.7 165.4 Q487.1 169.2 487.1 175.2L487.1 193.9"/>
<path stroke="#b98660" stroke-width="2.6" d="M754.9 162.8L747.3 167.6 Q743.1 170.3 742.9 175.3L742.0 193.9"/>
<path stroke="#c7925f" stroke-width="1.4" d="M754.9 162.8L747.3 167.6 Q743.1 170.3 742.9 175.3L742.0 193.9"/>
<path stroke="#b98660" stroke-width="8.2" d="M86.1 191.9L86.1 209.6 Q86.1 211.2 87.0 212.5L92.1 219.8"/>
<path stroke="#c7925f" stroke-width="6.6" d="M86.1 191.9L86.1 209.6 Q86.1 211.2 87.0 212.5L92.1 219.8"/>
<path stroke="#b98660" stroke-width="4.2" d="M504.3 316.8L474.3 340.4"/>
<path stroke="#c7925f" stroke-width="2.6" d="M504.3 316.8L474.3 340.4"/>
<path stroke="#b98660" stroke-width="2.8" d="M486.0 191.9L486.0 219.2 Q486.0 220.8 487.2 222.0L503.2 238.0"/>
<path stroke="#c7925f" stroke-width="1.4" d="M486.0 191.9L486.0 219.2 Q486.0 220.8 487.2 222.0L503.2 238.0"/>
<path stroke="#b98660" stroke-width="2.8" d="M741.0 191.9L741.0 204.3 Q741.0 205.9 742.2 206.9L762.4 224.1"/>
<path stroke="#c7925f" stroke-width="1.4" d="M741.0 191.9L741.0 204.3 Q741.0 205.9 742.2 206.9L762.4 224.1"/>
<path stroke="#ecc6ab" stroke-width="12.8" d="M728.1 191.3L728.1 386.9"/>
<path stroke="#d6a581" stroke-width="10.6" d="M728.1 191.3L728.1 386.9"/>
<path stroke="#ecc6ab" stroke-width="12.8" d="M730.5 384.9L730.5 417.9 Q730.5 423.9 734.9 428.1L765.5 457.7 Q769.8 461.8 769.9 467.8L771.4 587.9"/>
<path stroke="#d6a581" stroke-width="10.6" d="M730.5 384.9L730.5 417.9 Q730.5 423.9 734.9 428.1L765.5 457.7 Q769.8 461.8 769.9 467.8L771.4 587.9"/>
</g>
<polygon points="551.4,154.7 716.8,154.7 720.5,459.6 716.0,467.4 631.9,468.1 599.6,502.0 553.9,502.0 514.4,465.2 513.9,340.8 517.8,330.1 517.8,188.5" fill="url(#st)" stroke="#e0b590" stroke-width="1"/>
<circle cx="556.3" cy="200.5" r="2.6" fill="#2e2a12"/>
<circle cx="556.7" cy="278.3" r="2.6" fill="#2e2a12"/>
<circle cx="557.2" cy="356.5" r="2.6" fill="#2e2a12"/>
<circle cx="711.6" cy="264.1" r="2.6" fill="#2e2a12"/>
<circle cx="712.1" cy="355.8" r="2.6" fill="#2e2a12"/>
<circle cx="560.6" cy="479.7" r="2.6" fill="#2e2a12"/>
<circle cx="713.8" cy="434.0" r="2.6" fill="#2e2a12"/>
<circle cx="709.8" cy="182.9" r="2.6" fill="#2e2a12"/>
<g>
<circle cx="8.6" cy="52.5" r="5.6" fill="#cfa274"/><circle cx="8.6" cy="52.5" r="2.4" fill="#4f4820"/>
<circle cx="105.4" cy="22.5" r="6.2" fill="#cfa274"/><circle cx="105.4" cy="22.5" r="2.6" fill="#4f4820"/>
<circle cx="143.1" cy="21.4" r="6.2" fill="#cfa274"/><circle cx="143.1" cy="21.4" r="2.6" fill="#4f4820"/>
<circle cx="161.7" cy="4.3" r="5.6" fill="#cfa274"/><circle cx="161.7" cy="4.3" r="2.4" fill="#4f4820"/>
<circle cx="283.8" cy="6.4" r="6.0" fill="#cfa274"/><circle cx="283.8" cy="6.4" r="2.5" fill="#4f4820"/>
<circle cx="346.0" cy="163.9" r="5.6" fill="#cfa274"/><circle cx="346.0" cy="163.9" r="2.4" fill="#4f4820"/>
<circle cx="340.6" cy="182.1" r="5.6" fill="#cfa274"/><circle cx="340.6" cy="182.1" r="2.4" fill="#4f4820"/>
<circle cx="455.0" cy="49.7" r="6.2" fill="#cfa274"/><circle cx="455.0" cy="49.7" r="2.6" fill="#4f4820"/>
<circle cx="535.3" cy="52.5" r="6.2" fill="#cfa274"/><circle cx="535.3" cy="52.5" r="2.6" fill="#4f4820"/>
<circle cx="502.5" cy="77.5" r="6.2" fill="#cfa274"/><circle cx="502.5" cy="77.5" r="2.6" fill="#4f4820"/>
<circle cx="531.0" cy="77.5" r="6.2" fill="#cfa274"/><circle cx="531.0" cy="77.5" r="2.6" fill="#4f4820"/>
<circle cx="661.7" cy="21.4" r="6.2" fill="#cfa274"/><circle cx="661.7" cy="21.4" r="2.6" fill="#4f4820"/>
<circle cx="662.4" cy="59.6" r="6.2" fill="#cfa274"/><circle cx="662.4" cy="59.6" r="2.6" fill="#4f4820"/>
<circle cx="600.2" cy="105.4" r="6.2" fill="#cfa274"/><circle cx="600.2" cy="105.4" r="2.6" fill="#4f4820"/>
<circle cx="631.1" cy="107.1" r="6.2" fill="#cfa274"/><circle cx="631.1" cy="107.1" r="2.6" fill="#4f4820"/>
<circle cx="674.6" cy="107.1" r="6.2" fill="#cfa274"/><circle cx="674.6" cy="107.1" r="2.6" fill="#4f4820"/>
<circle cx="706.7" cy="105.4" r="6.2" fill="#cfa274"/><circle cx="706.7" cy="105.4" r="2.6" fill="#4f4820"/>
<circle cx="769.9" cy="121.0" r="6.2" fill="#cfa274"/><circle cx="769.9" cy="121.0" r="2.6" fill="#4f4820"/>
<circle cx="425.0" cy="133.2" r="6.2" fill="#cfa274"/><circle cx="425.0" cy="133.2" r="2.6" fill="#4f4820"/>
<circle cx="425.0" cy="171.4" r="6.2" fill="#cfa274"/><circle cx="425.0" cy="171.4" r="2.6" fill="#4f4820"/>
<circle cx="760.3" cy="161.7" r="6.2" fill="#cfa274"/><circle cx="760.3" cy="161.7" r="2.6" fill="#4f4820"/>
<circle cx="758.8" cy="186.4" r="6.2" fill="#cfa274"/><circle cx="758.8" cy="186.4" r="2.6" fill="#4f4820"/>
<circle cx="16.1" cy="220.4" r="6.0" fill="#cfa274"/><circle cx="16.1" cy="220.4" r="2.5" fill="#4f4820"/>
<circle cx="35.3" cy="219.8" r="6.0" fill="#cfa274"/><circle cx="35.3" cy="219.8" r="2.5" fill="#4f4820"/>
<circle cx="92.1" cy="219.8" r="6.0" fill="#cfa274"/><circle cx="92.1" cy="219.8" r="2.5" fill="#4f4820"/>
<circle cx="163.9" cy="278.7" r="6.0" fill="#cfa274"/><circle cx="163.9" cy="278.7" r="2.5" fill="#4f4820"/>
<circle cx="196.0" cy="269.7" r="6.0" fill="#cfa274"/><circle cx="196.0" cy="269.7" r="2.5" fill="#4f4820"/>
<circle cx="243.1" cy="247.6" r="6.0" fill="#cfa274"/><circle cx="243.1" cy="247.6" r="2.5" fill="#4f4820"/>
<circle cx="239.9" cy="266.9" r="6.0" fill="#cfa274"/><circle cx="239.9" cy="266.9" r="2.5" fill="#4f4820"/>
<circle cx="283.8" cy="234.8" r="6.0" fill="#cfa274"/><circle cx="283.8" cy="234.8" r="2.5" fill="#4f4820"/>
<circle cx="327.8" cy="203.7" r="6.0" fill="#cfa274"/><circle cx="327.8" cy="203.7" r="2.5" fill="#4f4820"/>
<circle cx="349.2" cy="215.5" r="6.0" fill="#cfa274"/><circle cx="349.2" cy="215.5" r="2.5" fill="#4f4820"/>
<circle cx="332.0" cy="244.4" r="6.0" fill="#cfa274"/><circle cx="332.0" cy="244.4" r="2.5" fill="#4f4820"/>
<circle cx="321.3" cy="266.9" r="6.0" fill="#cfa274"/><circle cx="321.3" cy="266.9" r="2.5" fill="#4f4820"/>
<circle cx="304.2" cy="275.5" r="6.0" fill="#cfa274"/><circle cx="304.2" cy="275.5" r="2.5" fill="#4f4820"/>
<circle cx="319.2" cy="307.6" r="6.0" fill="#cfa274"/><circle cx="319.2" cy="307.6" r="2.5" fill="#4f4820"/>
<circle cx="403.8" cy="260.5" r="6.0" fill="#cfa274"/><circle cx="403.8" cy="260.5" r="2.5" fill="#4f4820"/>
<circle cx="400.6" cy="281.9" r="6.0" fill="#cfa274"/><circle cx="400.6" cy="281.9" r="2.5" fill="#4f4820"/>
<circle cx="403.8" cy="304.4" r="6.0" fill="#cfa274"/><circle cx="403.8" cy="304.4" r="2.5" fill="#4f4820"/>
<circle cx="369.5" cy="332.2" r="6.0" fill="#cfa274"/><circle cx="369.5" cy="332.2" r="2.5" fill="#4f4820"/>
<circle cx="366.3" cy="351.5" r="6.0" fill="#cfa274"/><circle cx="366.3" cy="351.5" r="2.5" fill="#4f4820"/>
<circle cx="391.0" cy="347.2" r="6.0" fill="#cfa274"/><circle cx="391.0" cy="347.2" r="2.5" fill="#4f4820"/>
<circle cx="403.8" cy="366.5" r="6.0" fill="#cfa274"/><circle cx="403.8" cy="366.5" r="2.5" fill="#4f4820"/>
<circle cx="65.3" cy="316.8" r="6.0" fill="#cfa274"/><circle cx="65.3" cy="316.8" r="2.5" fill="#4f4820"/>
<circle cx="84.6" cy="316.8" r="6.0" fill="#cfa274"/><circle cx="84.6" cy="316.8" r="2.5" fill="#4f4820"/>
<circle cx="141.4" cy="310.4" r="6.0" fill="#cfa274"/><circle cx="141.4" cy="310.4" r="2.5" fill="#4f4820"/>
<circle cx="3.2" cy="326.9" r="6.0" fill="#cfa274"/><circle cx="3.2" cy="326.9" r="2.5" fill="#4f4820"/>
<circle cx="3.2" cy="345.1" r="6.0" fill="#cfa274"/><circle cx="3.2" cy="345.1" r="2.5" fill="#4f4820"/>
<circle cx="3.2" cy="370.8" r="6.0" fill="#cfa274"/><circle cx="3.2" cy="370.8" r="2.5" fill="#4f4820"/>
<circle cx="3.2" cy="389.0" r="6.0" fill="#cfa274"/><circle cx="3.2" cy="389.0" r="2.5" fill="#4f4820"/>
<circle cx="39.6" cy="383.7" r="6.0" fill="#cfa274"/><circle cx="39.6" cy="383.7" r="2.5" fill="#4f4820"/>
<circle cx="58.9" cy="383.7" r="6.0" fill="#cfa274"/><circle cx="58.9" cy="383.7" r="2.5" fill="#4f4820"/>
<circle cx="502.5" cy="200.5" r="6.2" fill="#cfa274"/><circle cx="502.5" cy="200.5" r="2.6" fill="#4f4820"/>
<circle cx="503.2" cy="238.0" r="6.2" fill="#cfa274"/><circle cx="503.2" cy="238.0" r="2.6" fill="#4f4820"/>
<circle cx="427.1" cy="235.8" r="6.2" fill="#cfa274"/><circle cx="427.1" cy="235.8" r="2.6" fill="#4f4820"/>
<circle cx="503.2" cy="278.3" r="6.2" fill="#cfa274"/><circle cx="503.2" cy="278.3" r="2.6" fill="#4f4820"/>
<circle cx="504.3" cy="316.8" r="6.2" fill="#cfa274"/><circle cx="504.3" cy="316.8" r="2.6" fill="#4f4820"/>
<circle cx="474.3" cy="340.4" r="6.2" fill="#cfa274"/><circle cx="474.3" cy="340.4" r="2.6" fill="#4f4820"/>
<circle cx="504.3" cy="356.2" r="6.2" fill="#cfa274"/><circle cx="504.3" cy="356.2" r="2.6" fill="#4f4820"/>
<circle cx="419.6" cy="198.4" r="6.2" fill="#cfa274"/><circle cx="419.6" cy="198.4" r="2.6" fill="#4f4820"/>
<circle cx="762.4" cy="224.1" r="6.2" fill="#cfa274"/><circle cx="762.4" cy="224.1" r="2.6" fill="#4f4820"/>
<circle cx="765.6" cy="264.1" r="6.2" fill="#cfa274"/><circle cx="765.6" cy="264.1" r="2.6" fill="#4f4820"/>
<circle cx="764.5" cy="370.8" r="6.2" fill="#cfa274"/><circle cx="764.5" cy="370.8" r="2.6" fill="#4f4820"/>
<circle cx="778.5" cy="382.6" r="6.2" fill="#cfa274"/><circle cx="778.5" cy="382.6" r="2.6" fill="#4f4820"/>
<circle cx="355.6" cy="450.3" r="6.0" fill="#cfa274"/><circle cx="355.6" cy="450.3" r="2.5" fill="#4f4820"/>
<circle cx="386.7" cy="448.1" r="6.0" fill="#cfa274"/><circle cx="386.7" cy="448.1" r="2.5" fill="#4f4820"/>
<circle cx="369.5" cy="436.3" r="6.0" fill="#cfa274"/><circle cx="369.5" cy="436.3" r="2.5" fill="#4f4820"/>
<circle cx="403.8" cy="397.8" r="6.0" fill="#cfa274"/><circle cx="403.8" cy="397.8" r="2.5" fill="#4f4820"/>
<circle cx="40.7" cy="387.1" r="6.0" fill="#cfa274"/><circle cx="40.7" cy="387.1" r="2.5" fill="#4f4820"/>
<circle cx="58.9" cy="387.1" r="6.0" fill="#cfa274"/><circle cx="58.9" cy="387.1" r="2.5" fill="#4f4820"/>
<circle cx="3.2" cy="390.3" r="6.0" fill="#cfa274"/><circle cx="3.2" cy="390.3" r="2.5" fill="#4f4820"/>
<circle cx="439.0" cy="439.1" r="6.2" fill="#cfa274"/><circle cx="439.0" cy="439.1" r="2.6" fill="#4f4820"/>
<circle cx="682.1" cy="478.6" r="6.2" fill="#cfa274"/><circle cx="682.1" cy="478.6" r="2.6" fill="#4f4820"/>
<circle cx="718.9" cy="478.6" r="6.2" fill="#cfa274"/><circle cx="718.9" cy="478.6" r="2.6" fill="#4f4820"/>
<circle cx="749.5" cy="478.6" r="6.2" fill="#cfa274"/><circle cx="749.5" cy="478.6" r="2.6" fill="#4f4820"/>
<circle cx="701.1" cy="512.7" r="6.2" fill="#cfa274"/><circle cx="701.1" cy="512.7" r="2.6" fill="#4f4820"/>
<circle cx="765.3" cy="434.0" r="6.2" fill="#cfa274"/><circle cx="765.3" cy="434.0" r="2.6" fill="#4f4820"/>
<circle cx="779.2" cy="387.1" r="6.2" fill="#cfa274"/><circle cx="779.2" cy="387.1" r="2.6" fill="#4f4820"/>
<circle cx="746.8" cy="571.1" r="6.2" fill="#cfa274"/><circle cx="746.8" cy="571.1" r="2.6" fill="#4f4820"/>
</g>
<circle cx="518.2" cy="145.7" r="6.4" fill="#d6a581"/><circle cx="518.2" cy="145.7" r="2.6" fill="#4a4216"/>
<rect x="19.2" y="33.6" width="13" height="3.4" rx="1" fill="#6e78a8" transform="rotate(-43 25.7 35.3)"/>
<rect x="72.8" y="19.7" width="13" height="3.4" rx="1" fill="#6e78a8" transform="rotate(-43 79.3 21.4)"/>
<rect x="67.4" y="48.6" width="13" height="3.4" rx="1" fill="#6e78a8" transform="rotate(-43 73.9 50.3)"/>
<rect x="101.7" y="48.6" width="13" height="3.4" rx="1" fill="#6e78a8" transform="rotate(-43 108.2 50.3)"/>
<rect x="143.5" y="32.6" width="13" height="3.4" rx="1" fill="#6e78a8" transform="rotate(-43 150.0 34.3)"/>
<rect x="160.6" y="33.6" width="13" height="3.4" rx="1" fill="#6e78a8" transform="rotate(-43 167.1 35.3)"/>
<rect x="174.5" y="39.0" width="13" height="3.4" rx="1" fill="#6e78a8" transform="rotate(-43 181.0 40.7)"/>
<rect x="187.4" y="44.4" width="13" height="3.4" rx="1" fill="#6e78a8" transform="rotate(-43 193.9 46.1)"/>
<rect x="119.9" y="64.7" width="13" height="3.4" rx="1" fill="#6e78a8" transform="rotate(-43 126.4 66.4)"/>
<rect x="146.7" y="56.1" width="13" height="3.4" rx="1" fill="#6e78a8" transform="rotate(-43 153.2 57.8)"/>
<rect x="164.9" y="56.1" width="13" height="3.4" rx="1" fill="#6e78a8" transform="rotate(-43 171.4 57.8)"/>
<rect x="176.7" y="62.6" width="13" height="3.4" rx="1" fill="#6e78a8" transform="rotate(-43 183.2 64.3)"/>
<rect x="205.6" y="55.1" width="13" height="3.4" rx="1" fill="#6e78a8" transform="rotate(-43 212.1 56.8)"/>
<rect x="217.4" y="60.4" width="13" height="3.4" rx="1" fill="#6e78a8" transform="rotate(-43 223.9 62.1)"/>
<rect x="225.9" y="41.1" width="13" height="3.4" rx="1" fill="#6e78a8" transform="rotate(-43 232.4 42.8)"/>
<rect x="167.0" y="82.9" width="13" height="3.4" rx="1" fill="#6e78a8" transform="rotate(-43 173.5 84.6)"/>
<rect x="-0.1" y="7.9" width="13" height="3.4" rx="1" fill="#6e78a8" transform="rotate(-43 6.4 9.6)"/>
<ellipse cx="603.1" cy="47.6" rx="17.8" ry="6.3" fill="#0c0d0c" opacity=".75"/>
<circle cx="618.9" cy="43.9" r="10.5" fill="url(#bl2)"/>
<ellipse cx="697.9" cy="48.5" rx="22.1" ry="7.8" fill="#0c0d0c" opacity=".75"/>
<circle cx="717.4" cy="43.9" r="13.0" fill="url(#bl2)"/>
<circle cx="437.8" cy="49.3" r="7.5" fill="url(#bl2)"/>
<circle cx="788.1" cy="213.4" r="7.5" fill="url(#bl)"/>
<circle cx="125.3" cy="9.6" r="7.0" fill="url(#bl2)"/>
<circle cx="15.0" cy="580.5" r="13.4" fill="url(#bl)"/>
<circle cx="68.5" cy="580.5" r="13.4" fill="url(#bl)"/>
<circle cx="122.0" cy="580.5" r="13.4" fill="url(#bl)"/>
<circle cx="174.6" cy="580.5" r="13.4" fill="url(#bl)"/>
<circle cx="228.0" cy="580.5" r="13.4" fill="url(#bl)"/>
<circle cx="280.6" cy="580.5" r="13.4" fill="url(#bl)"/>
<circle cx="334.0" cy="580.5" r="13.4" fill="url(#bl)"/>
<circle cx="387.7" cy="580.5" r="13.4" fill="url(#bl)"/>
<circle cx="440.1" cy="580.5" r="13.4" fill="url(#bl)"/>
<circle cx="494.8" cy="580.5" r="13.4" fill="url(#bl)"/>
<circle cx="547.2" cy="580.5" r="13.4" fill="url(#bl)"/>
<circle cx="600.7" cy="580.5" r="13.4" fill="url(#bl)"/>
<circle cx="653.1" cy="580.5" r="13.4" fill="url(#bl)"/>
<circle cx="705.6" cy="580.5" r="13.4" fill="url(#bl)"/>
<circle cx="812" cy="586" r="12" fill="#d6a581"/>
<g fill="#aab0c4" opacity=".55"><circle cx="556.0" cy="130.2" r="0.4"/><circle cx="638.5" cy="11.6" r="0.7"/><circle cx="444.6" cy="14.0" r="0.5"/><circle cx="595.1" cy="405.6" r="0.5"/><circle cx="674.1" cy="499.5" r="0.6"/><circle cx="809.8" cy="171.7" r="0.6"/><circle cx="486.1" cy="61.7" r="0.9"/><circle cx="500.3" cy="127.8" r="0.6"/><circle cx="643.1" cy="11.9" r="0.5"/><circle cx="694.7" cy="62.8" r="0.8"/><circle cx="606.3" cy="158.9" r="0.8"/><circle cx="525.0" cy="105.0" r="0.9"/><circle cx="713.8" cy="196.0" r="0.5"/><circle cx="592.6" cy="411.5" r="0.7"/><circle cx="445.3" cy="538.3" r="0.7"/><circle cx="770.6" cy="139.1" r="0.8"/><circle cx="655.6" cy="168.0" r="1.0"/><circle cx="614.4" cy="392.6" r="0.8"/><circle cx="681.7" cy="550.1" r="0.6"/><circle cx="580.1" cy="384.7" r="0.7"/><circle cx="495.4" cy="11.8" r="0.9"/><circle cx="480.3" cy="78.2" r="0.9"/><circle cx="461.3" cy="109.9" r="0.9"/><circle cx="748.7" cy="437.6" r="0.6"/><circle cx="569.6" cy="578.3" r="0.5"/><circle cx="498.5" cy="46.7" r="0.7"/><circle cx="659.2" cy="0.8" r="0.7"/><circle cx="573.6" cy="190.6" r="0.8"/><circle cx="630.5" cy="520.0" r="0.4"/><circle cx="779.9" cy="561.0" r="0.9"/><circle cx="582.6" cy="20.7" r="0.8"/><circle cx="454.2" cy="41.8" r="0.5"/><circle cx="562.3" cy="0.0" r="0.5"/><circle cx="469.5" cy="5.1" r="0.9"/><circle cx="668.9" cy="50.5" r="0.6"/><circle cx="571.7" cy="169.8" r="1.0"/><circle cx="611.3" cy="17.2" r="0.5"/><circle cx="563.3" cy="165.8" r="0.5"/><circle cx="439.0" cy="489.3" r="0.5"/><circle cx="641.3" cy="105.6" r="1.0"/><circle cx="765.8" cy="434.1" r="0.6"/><circle cx="495.0" cy="490.2" r="0.9"/><circle cx="558.2" cy="162.3" r="1.0"/><circle cx="761.7" cy="549.4" r="0.8"/><circle cx="518.2" cy="71.1" r="0.4"/><circle cx="440.9" cy="51.8" r="0.8"/><circle cx="802.1" cy="187.4" r="1.0"/><circle cx="801.5" cy="44.1" r="0.5"/><circle cx="506.5" cy="124.8" r="0.9"/><circle cx="756.9" cy="130.6" r="0.9"/><circle cx="463.0" cy="568.3" r="0.9"/><circle cx="721.8" cy="35.7" r="0.9"/><circle cx="559.3" cy="581.1" r="0.6"/><circle cx="586.1" cy="530.0" r="0.5"/><circle cx="479.4" cy="181.0" r="0.9"/><circle cx="486.9" cy="582.9" r="0.8"/><circle cx="566.3" cy="26.2" r="0.4"/><circle cx="807.7" cy="489.0" r="1.0"/><circle cx="598.8" cy="551.0" r="0.5"/><circle cx="528.0" cy="48.1" r="0.8"/><circle cx="530.9" cy="26.2" r="0.9"/><circle cx="567.6" cy="116.7" r="0.9"/><circle cx="593.6" cy="483.8" r="0.7"/><circle cx="633.6" cy="88.0" r="0.5"/><circle cx="431.5" cy="415.7" r="0.7"/><circle cx="712.1" cy="65.2" r="0.7"/><circle cx="646.1" cy="402.0" r="0.7"/><circle cx="526.7" cy="154.5" r="0.7"/><circle cx="648.5" cy="568.9" r="0.7"/><circle cx="668.3" cy="102.4" r="0.8"/><circle cx="606.0" cy="95.6" r="1.0"/><circle cx="702.0" cy="575.0" r="0.6"/><circle cx="647.7" cy="553.9" r="0.5"/><circle cx="477.3" cy="14.5" r="0.5"/><circle cx="458.4" cy="542.3" r="0.9"/><circle cx="490.1" cy="516.7" r="0.5"/><circle cx="773.4" cy="425.5" r="1.0"/><circle cx="584.9" cy="198.0" r="0.9"/><circle cx="492.8" cy="103.1" r="0.6"/><circle cx="506.1" cy="144.4" r="0.4"/><circle cx="645.5" cy="3.6" r="0.6"/><circle cx="672.7" cy="12.9" r="1.0"/><circle cx="736.7" cy="401.7" r="0.6"/><circle cx="445.4" cy="436.0" r="0.5"/><circle cx="594.3" cy="549.5" r="0.6"/><circle cx="488.1" cy="498.1" r="0.8"/><circle cx="464.8" cy="137.6" r="0.7"/><circle cx="458.2" cy="511.3" r="0.9"/><circle cx="462.6" cy="393.8" r="0.9"/><circle cx="606.5" cy="110.6" r="1.0"/><circle cx="534.2" cy="105.4" r="0.5"/><circle cx="472.6" cy="10.1" r="0.5"/><circle cx="551.4" cy="151.9" r="0.6"/><circle cx="624.5" cy="69.4" r="0.4"/><circle cx="527.4" cy="146.6" r="0.7"/><circle cx="503.7" cy="186.9" r="0.5"/><circle cx="748.6" cy="99.0" r="0.9"/><circle cx="582.9" cy="137.5" r="1.0"/><circle cx="563.3" cy="526.3" r="0.8"/><circle cx="587.4" cy="10.9" r="0.5"/><circle cx="457.5" cy="432.9" r="0.5"/><circle cx="462.9" cy="560.2" r="0.8"/><circle cx="539.7" cy="58.6" r="0.7"/><circle cx="491.3" cy="52.6" r="1.0"/><circle cx="808.4" cy="48.9" r="1.0"/><circle cx="550.4" cy="0.2" r="0.6"/><circle cx="614.6" cy="40.2" r="0.7"/><circle cx="431.9" cy="18.0" r="0.6"/><circle cx="446.2" cy="60.8" r="0.5"/><circle cx="657.8" cy="150.1" r="0.8"/><circle cx="708.5" cy="460.6" r="0.6"/><circle cx="813.1" cy="144.8" r="0.8"/><circle cx="447.0" cy="564.6" r="0.8"/><circle cx="715.5" cy="408.8" r="0.7"/><circle cx="626.2" cy="546.6" r="0.9"/><circle cx="657.2" cy="521.4" r="0.8"/><circle cx="519.4" cy="26.6" r="0.6"/><circle cx="470.8" cy="495.6" r="0.8"/><circle cx="673.6" cy="481.3" r="0.4"/><circle cx="740.3" cy="484.1" r="0.7"/><circle cx="686.5" cy="147.4" r="0.6"/><circle cx="459.0" cy="145.9" r="0.5"/><circle cx="717.8" cy="482.2" r="0.6"/><circle cx="616.3" cy="538.8" r="0.8"/><circle cx="680.0" cy="29.5" r="0.6"/><circle cx="719.1" cy="113.6" r="0.4"/><circle cx="453.6" cy="134.4" r="0.8"/><circle cx="692.9" cy="103.3" r="0.7"/><circle cx="611.4" cy="178.7" r="0.5"/><circle cx="810.5" cy="383.6" r="0.7"/><circle cx="748.9" cy="473.0" r="0.6"/><circle cx="511.6" cy="423.6" r="0.7"/><circle cx="485.1" cy="190.5" r="0.5"/><circle cx="749.1" cy="177.4" r="0.8"/><circle cx="520.0" cy="480.6" r="0.4"/><circle cx="431.4" cy="90.2" r="0.6"/><circle cx="484.7" cy="63.2" r="0.9"/><circle cx="430.7" cy="553.7" r="0.5"/><circle cx="790.4" cy="566.6" r="0.6"/><circle cx="574.8" cy="199.8" r="0.8"/><circle cx="570.3" cy="55.0" r="0.4"/><circle cx="469.6" cy="439.1" r="1.0"/><circle cx="527.0" cy="102.2" r="0.5"/><circle cx="575.2" cy="563.0" r="0.9"/><circle cx="675.4" cy="574.7" r="0.7"/><circle cx="709.9" cy="146.5" r="0.7"/><circle cx="722.8" cy="439.2" r="0.4"/><circle cx="790.5" cy="94.4" r="0.6"/><circle cx="545.8" cy="582.1" r="0.6"/><circle cx="685.2" cy="111.5" r="0.6"/><circle cx="495.1" cy="41.6" r="0.9"/><circle cx="623.4" cy="181.3" r="1.0"/><circle cx="605.0" cy="38.5" r="0.5"/><circle cx="563.0" cy="47.8" r="0.6"/><circle cx="651.6" cy="535.2" r="0.6"/><circle cx="591.0" cy="75.4" r="0.6"/><circle cx="454.1" cy="193.5" r="0.5"/><circle cx="625.8" cy="558.6" r="0.5"/><circle cx="535.4" cy="80.0" r="0.7"/><circle cx="801.1" cy="560.7" r="0.4"/><circle cx="442.5" cy="565.4" r="0.7"/><circle cx="658.4" cy="78.3" r="1.0"/><circle cx="751.2" cy="581.3" r="0.5"/><circle cx="472.4" cy="104.5" r="0.8"/><circle cx="796.2" cy="514.0" r="0.9"/><circle cx="607.9" cy="7.9" r="0.9"/><circle cx="520.5" cy="513.6" r="0.6"/><circle cx="479.8" cy="127.3" r="0.8"/><circle cx="473.6" cy="104.9" r="0.7"/><circle cx="581.0" cy="120.2" r="0.4"/><circle cx="547.3" cy="191.8" r="0.8"/><circle cx="773.8" cy="47.0" r="0.5"/><circle cx="803.7" cy="443.6" r="0.4"/><circle cx="623.8" cy="466.9" r="0.6"/><circle cx="689.6" cy="426.9" r="0.4"/><circle cx="561.5" cy="136.5" r="0.5"/><circle cx="740.1" cy="484.5" r="0.5"/><circle cx="807.3" cy="164.0" r="0.5"/><circle cx="516.1" cy="441.1" r="1.0"/><circle cx="622.9" cy="44.7" r="0.7"/><circle cx="688.8" cy="410.3" r="0.6"/><circle cx="512.8" cy="409.4" r="0.4"/><circle cx="453.4" cy="179.6" r="0.9"/><circle cx="715.0" cy="572.8" r="0.6"/><circle cx="502.2" cy="534.5" r="0.4"/><circle cx="688.5" cy="74.8" r="0.6"/><circle cx="495.8" cy="56.0" r="0.6"/><circle cx="801.7" cy="192.9" r="0.5"/><circle cx="568.7" cy="550.2" r="0.7"/><circle cx="449.2" cy="74.5" r="1.0"/><circle cx="505.1" cy="179.4" r="0.4"/><circle cx="589.8" cy="538.7" r="0.4"/><circle cx="443.6" cy="184.0" r="0.6"/><circle cx="720.7" cy="450.2" r="0.6"/><circle cx="802.5" cy="434.3" r="0.8"/><circle cx="553.1" cy="0.8" r="0.9"/><circle cx="786.5" cy="575.3" r="0.4"/><circle cx="521.0" cy="191.4" r="1.0"/><circle cx="580.4" cy="86.0" r="0.7"/><circle cx="791.0" cy="160.5" r="0.8"/><circle cx="750.1" cy="505.7" r="0.6"/><circle cx="554.3" cy="156.4" r="0.4"/><circle cx="506.8" cy="431.2" r="0.4"/><circle cx="443.2" cy="65.2" r="1.0"/><circle cx="773.7" cy="434.8" r="0.5"/><circle cx="467.5" cy="142.0" r="0.7"/><circle cx="521.1" cy="124.1" r="0.8"/><circle cx="721.0" cy="517.5" r="0.5"/><circle cx="757.1" cy="113.4" r="0.6"/><circle cx="717.1" cy="49.5" r="0.5"/><circle cx="489.6" cy="499.7" r="0.6"/><circle cx="584.1" cy="485.0" r="0.5"/><circle cx="744.5" cy="585.1" r="0.5"/><circle cx="614.7" cy="554.0" r="0.9"/><circle cx="445.7" cy="23.8" r="0.5"/><circle cx="808.5" cy="186.0" r="0.6"/><circle cx="766.9" cy="52.0" r="0.9"/><circle cx="797.9" cy="119.2" r="0.8"/><circle cx="514.7" cy="28.3" r="0.5"/><circle cx="529.2" cy="130.3" r="0.5"/><circle cx="434.4" cy="135.7" r="0.5"/><circle cx="551.4" cy="159.1" r="0.7"/><circle cx="454.6" cy="79.1" r="0.7"/><circle cx="678.6" cy="32.7" r="0.8"/><circle cx="589.4" cy="61.5" r="1.0"/><circle cx="551.5" cy="71.4" r="0.6"/><circle cx="766.2" cy="455.3" r="0.5"/><circle cx="713.2" cy="1.2" r="0.9"/><circle cx="594.8" cy="464.1" r="0.9"/><circle cx="609.3" cy="3.0" r="0.7"/><circle cx="679.2" cy="398.4" r="0.8"/><circle cx="574.3" cy="29.2" r="0.6"/><circle cx="632.7" cy="402.5" r="0.7"/><circle cx="743.1" cy="420.8" r="0.5"/><circle cx="796.9" cy="479.9" r="0.4"/><circle cx="790.3" cy="180.8" r="0.8"/><circle cx="750.8" cy="157.2" r="0.5"/><circle cx="587.3" cy="551.6" r="0.5"/><circle cx="514.9" cy="103.6" r="0.6"/><circle cx="477.9" cy="145.0" r="0.9"/><circle cx="446.0" cy="151.5" r="0.4"/><circle cx="756.1" cy="119.9" r="0.7"/><circle cx="673.9" cy="84.0" r="0.7"/><circle cx="595.6" cy="472.5" r="0.7"/><circle cx="439.1" cy="481.3" r="0.5"/><circle cx="727.0" cy="474.9" r="0.5"/><circle cx="614.1" cy="25.7" r="0.7"/><circle cx="465.7" cy="102.0" r="0.4"/><circle cx="677.6" cy="146.7" r="0.9"/><circle cx="629.0" cy="100.8" r="0.6"/><circle cx="799.9" cy="171.4" r="1.0"/><circle cx="714.8" cy="420.1" r="1.0"/><circle cx="621.3" cy="569.6" r="0.5"/><circle cx="736.7" cy="393.6" r="0.6"/><circle cx="724.2" cy="179.3" r="0.6"/><circle cx="747.3" cy="100.4" r="1.0"/><circle cx="511.0" cy="101.2" r="0.6"/><circle cx="444.3" cy="32.2" r="1.0"/><circle cx="694.4" cy="414.9" r="0.9"/><circle cx="474.8" cy="127.3" r="0.6"/></g>
</g></svg>
  <svg class="abs" style="left:282px;top:1px" width="819" height="587" viewBox="0 0 819 587">
    <circle cx="642" cy="391" r="28.500" fill="rgba(239,68,68,.28)" stroke="#ef4444" stroke-width="1.600"/>
    <circle cx="642" cy="391" r="7.300" fill="#ef4444" stroke="#fff" stroke-width="1.400"/>
    <text x="642" y="394" font-family="Liberation Sans, sans-serif" font-size="8.500" font-weight="700" fill="#fff" text-anchor="middle">1</text>
    <circle cx="585.200" cy="187.400" r="17.300" fill="rgba(249,115,22,.38)" stroke="#f97316" stroke-width="1.600"/>
    <circle cx="585.200" cy="187.400" r="7.300" fill="#f97316" stroke="#fff" stroke-width="1.400"/>
    <text x="585.200" y="190.400" font-family="Liberation Sans, sans-serif" font-size="8.500" font-weight="700" fill="#fff" text-anchor="middle">2</text>
  </svg>
  <div class="note">2 defect locations marked</div>
  <div class="hist">
    <svg class="abs" style="left:10px;top:9px" width="20" height="20" viewBox="0 0 24 24" fill="none" stroke="#4b5563" stroke-width="1.800" stroke-linecap="round" stroke-linejoin="round"><path d="M3 7v6h6"/><path d="M21 17a9 9 0 0 0-9-9 9 9 0 0 0-6 2.300L3 13"/></svg>
    <svg class="abs" style="left:46px;top:9px" width="20" height="20" viewBox="0 0 24 24" fill="none" stroke="#4b5563" stroke-width="1.800" stroke-linecap="round" stroke-linejoin="round"><path d="M21 7v6h-6"/><path d="M3 17a9 9 0 0 1 9-9 9 9 0 0 1 6 2.300l3 2.700"/></svg>
    <div class="abs" style="left:76px;top:9px;width:1px;height:22px;background:#e5e7eb"></div>
    <svg class="abs" style="left:89px;top:10px" width="18" height="20" viewBox="0 0 18 20" fill="none" stroke="#4b5563" stroke-width="1.400" stroke-linecap="round" stroke-linejoin="round"><path d="M2.500 5h13M6.500 5V3.300c0-.5.400-.8.800-.8h3.400c.4 0 .8.300.8.800V5M4 5v11c0 .8.600 1.500 1.500 1.500h7c.9 0 1.500-.7 1.500-1.500V5"/></svg>
  </div>
</div>
<div id="zbar">
  <svg class="abs" style="left:668px;top:12px" width="18" height="18" viewBox="0 0 18 18" fill="none" stroke="#4b5563" stroke-width="1.300" stroke-linecap="round"><circle cx="8.300" cy="8.300" r="6.300"/><path d="M12.900 12.900l3.300 3.300M6 8.300h4.600"/></svg>
  <div class="abs" id="zp" style="left:712px;top:12px;font-size:13.200px;line-height:18px;color:#1f2937">136%</div>
  <svg class="abs" style="left:771px;top:12px" width="18" height="18" viewBox="0 0 18 18" fill="none" stroke="#4b5563" stroke-width="1.300" stroke-linecap="round"><circle cx="8.300" cy="8.300" r="6.300"/><path d="M12.900 12.900l3.300 3.300M6 8.300h4.600M8.300 6v4.600"/></svg>
  <svg class="abs" style="left:812px;top:12px" width="18" height="18" viewBox="0 0 18 18" fill="none" stroke="#4b5563" stroke-width="1.400" stroke-linecap="round" stroke-linejoin="round"><path d="M10.800 2.200h5v5M15.800 2.200l-5.300 5.300M7.200 15.800h-5v-5M2.200 15.800l5.300-5.300"/></svg>
</div>
<div id="libh">
  <div class="abs" id="il" style="left:14px;top:14px;font-size:13.500px;font-weight:700;line-height:20px;color:#111827;letter-spacing:-.2px">Image Library</div>
  <div class="lbtn" id="ball" style="left:851px;width:34px;text-align:center;color:#111827">All</div>
  <div class="ltxt" id="bup" style="left:900px">Uploaded</div>
  <div class="ltxt" id="bgen" style="left:978px">Generated</div>
  <div class="lbtn" style="left:1054px;width:152px;background:#f9fafb"><svg class="abs" style="left:10px;top:7px" width="14" height="14" viewBox="0 0 14 14" fill="none" stroke="#9ca3af" stroke-width="1.200" stroke-linecap="round"><circle cx="6.300" cy="6.300" r="5"/><path d="M10 10l2.600 2.600"/></svg><span class="abs" style="left:29px;top:0;color:#9ca3af">Search...</span></div>
  <div class="ltxt" id="bsel" style="left:1216px">1/16 selected</div>
  <div class="lbtn" style="left:1298px;width:93px"><svg class="abs" style="left:10px;top:8px" width="13" height="13" viewBox="0 0 13 13" fill="none" stroke="#4b5563" stroke-width="1.200" stroke-linecap="round" stroke-linejoin="round"><path d="M6.500 1.500v6.500M3.700 5.500L6.500 8.300 9.300 5.500M1.500 8.500v2.300c0 .4.300.7.700.7h8.600c.4 0 .7-.3.700-.7V8.500"/></svg><span class="abs" id="bdl" style="left:27px;top:0">Download</span></div>
  <div class="lbtn" style="left:1400px;width:83px"><svg class="abs" style="left:10px;top:7px" width="14" height="14" viewBox="0 0 14 14" fill="none" stroke="#4b5563" stroke-width="1.200" stroke-linecap="round" stroke-linejoin="round"><path d="M8.500 1.500h4v4M12.500 1.500L8.300 5.700M5.500 12.500h-4v-4M1.500 12.500l4.200-4.200"/></svg><span class="abs" id="bex" style="left:32px;top:0">Expand</span></div>
</div>
<!--LIBS--><div id="lib">
<div class="card" style="left:15.6px"><svg class="im" style="top:13px" width="132" height="100" viewBox="0 -20.5 819 628" preserveAspectRatio="none"><use href="#pcbsym"/><rect x="0" y="0" width="500" height="587" fill="#b08a3c" opacity=".16"/><circle cx="585" cy="200" r="17" fill="#1b1b22"/><circle cx="590" cy="196" r="6" fill="#555a70"/></svg><div class="cb"></div><div class="tag g">Generated</div><div class="tm">Just now</div></div>
<div class="card" style="left:159.6px"><svg class="im" style="top:13px" width="132" height="100" viewBox="0 -20.5 819 628" preserveAspectRatio="none"><use href="#pcbsym"/><rect x="0" y="0" width="500" height="587" fill="#b08a3c" opacity=".16"/><circle cx="585" cy="200" r="16" fill="#2a2c38"/><circle cx="592" cy="203" r="8" fill="#8a90a8"/></svg><div class="cb"></div><div class="tag g">Generated</div><div class="tm">1m ago</div></div>
<div class="card cur" style="left:303.6px;top:14px;width:132px"><div class="ring"></div><svg class="im" style="top:13px" width="132" height="100" viewBox="0 -20.5 819 628" preserveAspectRatio="none"><use href="#pcbsym"/></svg><div class="cb on"><svg width="17" height="17" viewBox="0 0 17 17" fill="none" stroke="#fff" stroke-width="1.800" stroke-linecap="round" stroke-linejoin="round" style="position:absolute;left:0;top:0"><path d="M4.500 8.800l2.800 2.800 5.400-5.800"/></svg></div><div class="tag s">Source</div><div class="tm">3m ago</div></div>
<div class="card" style="left:447.6px"><svg class="im" style="top:13px" width="132" height="100" viewBox="0 0 132 100">
<defs><linearGradient id="st1" x1="0" y1="0" x2="1" y2="1"><stop offset="0" stop-color="#e8e8e8"/><stop offset=".5" stop-color="#8c8c8c"/><stop offset="1" stop-color="#d4d4d4"/></linearGradient></defs>
<rect width="132" height="100" fill="#fff"/>
<ellipse cx="66" cy="93" rx="58" ry="6" fill="#e3e3e3"/>
<ellipse cx="40" cy="44" rx="39" ry="42" fill="url(#st1)"/><ellipse cx="40" cy="44" rx="33" ry="36" fill="#4a4a4a"/>
<g fill="#e9e9e9" stroke="#777" stroke-width=".8"><circle cx="18" cy="22" r="4.200"/><circle cx="29" cy="13" r="4.200"/><circle cx="43" cy="10" r="4.200"/><circle cx="56" cy="14" r="4.200"/><circle cx="66" cy="23" r="4.200"/><circle cx="11" cy="35" r="4.200"/><circle cx="10" cy="50" r="4.200"/><circle cx="14" cy="64" r="4.200"/></g>
<ellipse cx="41" cy="45" rx="24" ry="27" fill="url(#st1)"/><ellipse cx="42" cy="46" rx="15.500" ry="18" fill="#fff"/>
<circle cx="102" cy="56" r="30.500" fill="url(#st1)"/><circle cx="102" cy="56" r="27" fill="#7a4a28"/><circle cx="102" cy="56" r="18.500" fill="url(#st1)"/><circle cx="103" cy="57" r="11.500" fill="#fff"/>
<circle cx="66" cy="71" r="27.500" fill="url(#st1)"/><circle cx="66" cy="71" r="23" fill="#e6d3a8"/><circle cx="66" cy="71" r="15" fill="url(#st1)"/><circle cx="66" cy="71" r="10.500" fill="#1e1e1e"/>
</svg><div class="cb"></div><div class="tag g">Generated</div><div class="tm">29m ago</div></div>
<div class="card" style="left:591.6px"><svg class="im" style="top:13px" width="132" height="100" viewBox="0 0 132 100">
<defs><linearGradient id="st2" x1="0" y1="0" x2="1" y2="1"><stop offset="0" stop-color="#e8e8e8"/><stop offset=".5" stop-color="#8c8c8c"/><stop offset="1" stop-color="#d4d4d4"/></linearGradient></defs>
<rect width="132" height="100" fill="#fff"/>
<ellipse cx="66" cy="93" rx="58" ry="6" fill="#e3e3e3"/>
<ellipse cx="40" cy="44" rx="39" ry="42" fill="url(#st2)"/><ellipse cx="40" cy="44" rx="33" ry="36" fill="#4a4a4a"/>
<g fill="#e9e9e9" stroke="#777" stroke-width=".8"><circle cx="18" cy="22" r="4.200"/><circle cx="29" cy="13" r="4.200"/><circle cx="43" cy="10" r="4.200"/><circle cx="56" cy="14" r="4.200"/><circle cx="66" cy="23" r="4.200"/><circle cx="11" cy="35" r="4.200"/><circle cx="10" cy="50" r="4.200"/><circle cx="14" cy="64" r="4.200"/></g>
<ellipse cx="41" cy="45" rx="24" ry="27" fill="url(#st2)"/><ellipse cx="42" cy="46" rx="15.500" ry="18" fill="#fff"/>
<circle cx="102" cy="56" r="30.500" fill="url(#st2)"/><circle cx="102" cy="56" r="27" fill="#7a4a28"/><circle cx="102" cy="56" r="18.500" fill="url(#st2)"/><circle cx="103" cy="57" r="11.500" fill="#fff"/>
<circle cx="66" cy="71" r="27.500" fill="url(#st2)"/><circle cx="66" cy="71" r="23" fill="#e6d3a8"/><circle cx="66" cy="71" r="15" fill="url(#st2)"/><circle cx="66" cy="71" r="10.500" fill="#1e1e1e"/>
</svg><div class="cb"></div><div class="tag s">Source</div><div class="tm">29m ago</div></div>
<div class="card" style="left:735.6px"><svg class="im" style="top:26px" width="132" height="74" viewBox="0 0 132 74">
<defs><linearGradient id="cs1" x1="0" y1="0" x2="1" y2="1"><stop offset="0" stop-color="#cfd0ca"/><stop offset="1" stop-color="#9b9d96"/></linearGradient></defs>
<rect width="132" height="74" fill="#2b323c"/>
<polygon points="11,0 52,0 50,12 30,16 14,14" fill="#6f7a5e"/>
<polygon points="0,0 12,0 22,40 10,74 0,74" fill="#3a4656"/>
<polygon points="120,0 132,0 132,74 112,74" fill="#1d2530"/><polygon points="126,40 132,30 132,74 118,74" fill="#1f4a8a"/>
<polygon points="54,1.5 73,.7 79,3 70,38.5 61,40 48,20.7" fill="url(#cs1)"/>
<polygon points="85,3 117.5,1.5 122,12 113,56.4 96.7,59.3 73,43 76,17.800" fill="url(#cs1)"/>
<polygon points="88,8 112,6 108,26 84,28" fill="#8f918b"/>
<polygon points="24,32.600 49.200,28 61,38.500 55.200,43 30,41.500" fill="#c4c5bf"/>
<polygon points="40.300,49 67,43 98.200,59.300 105.600,59.300 99.700,72.600 58,73.400 44.800,60.800" fill="#c1c2bc"/>
<polygon points="14,52 40,48 46,62 56,74 8,74" fill="#1b1f26"/>
</svg><div class="cb"></div><div class="tag s">Source</div><div class="tm">29m ago</div></div>
<div class="card" style="left:879.6px"><svg class="im" style="top:26px" width="132" height="74" viewBox="0 0 132 74">
<defs><linearGradient id="tr1" x1="0" y1="0" x2="1" y2="1"><stop offset="0" stop-color="#2c2c2c"/><stop offset=".6" stop-color="#6a6a6a"/><stop offset="1" stop-color="#3a3a3a"/></linearGradient></defs>
<rect width="132" height="74" fill="#141414"/>
<polygon points="22,16 118,16 124,66 12,66" fill="url(#tr1)"/>
<circle cx="66" cy="-9" r="29" fill="#5a5a5a" stroke="#fff" stroke-width="5"/>
<rect x="20" y="13" width="98" height="3" fill="#9a9a9a"/>
<g transform="rotate(-33 68 40)"><rect x="42" y="31" width="54" height="17" rx="1.500" fill="#161616"/><rect x="47" y="37" width="40" height="5" fill="#d9d9d9"/><rect x="38" y="34" width="6" height="11" fill="#222"/></g>
<rect x="0" y="66" width="132" height="8" fill="#050505"/><rect x="55" y="69" width="60" height="3" fill="#cfcfcf"/><rect x="22" y="69" width="33" height="3" fill="#555"/>
</svg><div class="cb"></div><div class="tag g">Generated</div><div class="tm">30m ago</div></div>
<div class="card" style="left:1023.6px"><svg class="im" style="top:26px" width="132" height="74" viewBox="0 0 132 74">
<defs><linearGradient id="tr2" x1="0" y1="0" x2="1" y2="1"><stop offset="0" stop-color="#2c2c2c"/><stop offset=".6" stop-color="#6a6a6a"/><stop offset="1" stop-color="#3a3a3a"/></linearGradient></defs>
<rect width="132" height="74" fill="#141414"/>
<polygon points="22,16 118,16 124,66 12,66" fill="url(#tr2)"/>
<circle cx="66" cy="-9" r="29" fill="#5a5a5a" stroke="#fff" stroke-width="5"/>
<rect x="20" y="13" width="98" height="3" fill="#9a9a9a"/>
<g transform="rotate(-33 68 40)"><rect x="42" y="31" width="54" height="17" rx="1.500" fill="#161616"/><rect x="47" y="37" width="40" height="5" fill="#d9d9d9"/><rect x="38" y="34" width="6" height="11" fill="#222"/></g>
<rect x="0" y="66" width="132" height="8" fill="#050505"/><rect x="55" y="69" width="60" height="3" fill="#cfcfcf"/><rect x="22" y="69" width="33" height="3" fill="#555"/>
</svg><div class="cb"></div><div class="tag g">Generated</div><div class="tm">49m ago</div></div>
<div class="card" style="left:1167.6px"><svg class="im" style="top:26px" width="132" height="74" viewBox="0 0 132 74">
<defs><linearGradient id="tr3" x1="0" y1="0" x2="1" y2="1"><stop offset="0" stop-color="#2c2c2c"/><stop offset=".6" stop-color="#6a6a6a"/><stop offset="1" stop-color="#3a3a3a"/></linearGradient></defs>
<rect width="132" height="74" fill="#141414"/>
<polygon points="22,16 118,16 124,66 12,66" fill="url(#tr3)"/>
<circle cx="66" cy="-9" r="29" fill="#5a5a5a" stroke="#fff" stroke-width="5"/>
<rect x="20" y="13" width="98" height="3" fill="#9a9a9a"/>
<g transform="rotate(-33 68 40)"><rect x="42" y="31" width="54" height="17" rx="1.500" fill="#161616"/><rect x="47" y="37" width="40" height="5" fill="#d9d9d9"/><rect x="38" y="34" width="6" height="11" fill="#222"/></g>
<rect x="0" y="66" width="132" height="8" fill="#050505"/><rect x="55" y="69" width="60" height="3" fill="#cfcfcf"/><rect x="22" y="69" width="33" height="3" fill="#555"/>
</svg><div class="cb"></div><div class="tag g">Generated</div><div class="tm">50m ago</div></div>
<div class="card" style="left:1311.6px"><svg class="im" style="top:26px" width="132" height="74" viewBox="0 0 132 74">
<rect width="132" height="74" fill="#fff"/>
<polygon points="12,32 96,4 121,8 46,42" fill="#b4b6b1"/>
<polygon points="30,33 98,9 116,11 47,40" fill="#8f918c"/>
<polygon points="12,32 46,42 50,70 16,58" fill="#7f827c"/>
<polygon points="46,42 121,8 122,26 50,70" fill="#a9aba6"/>
<g stroke="#9a9c97" stroke-width="1"><path d="M60 64v5M68 59v5M76 54v5M84 50v5M92 45v5M100 40v5M108 36v5M116 31v5"/></g>
</svg><div class="cb"></div><div class="tag g">Generated</div><div class="tm">1h ago</div></div>
<div class="card" style="left:1455.6px"><svg class="im" style="top:26px" width="132" height="74" viewBox="0 0 132 74">
<rect width="132" height="74" fill="#fff"/>
<polygon points="12,32 96,4 121,8 46,42" fill="#b4b6b1"/>
<polygon points="30,33 98,9 116,11 47,40" fill="#8f918c"/>
<polygon points="12,32 46,42 50,70 16,58" fill="#7f827c"/>
<polygon points="46,42 121,8 122,26 50,70" fill="#a9aba6"/>
<g stroke="#9a9c97" stroke-width="1"><path d="M60 64v5M68 59v5M76 54v5M84 50v5M92 45v5M100 40v5M108 36v5M116 31v5"/></g>
</svg><div class="cb"></div><div class="tm">3h ago</div></div>
<div class="abs" style="left:14px;top:147px;width:1469px;height:4px;border-radius:3px;background:#e5e7eb"></div>
<div class="abs" style="left:14px;top:146px;width:946px;height:5px;border-radius:3px;background:#7c3aed"></div>
</div><!--LIBE-->
<div id="rp">
  <div id="rph">
    <div class="abs" id="dim" style="left:18px;top:21px;font-size:15px;font-weight:700;line-height:20px;color:#111827;letter-spacing:0">1408×1080</div>
    <svg class="abs" style="left:222px;top:23px" width="15" height="15" viewBox="0 0 15 15" fill="none" stroke="#1f2937" stroke-width="1.400" stroke-linejoin="round" stroke-linecap="round"><rect x="1.200" y="1.200" width="12.600" height="12.600" rx="1.800"/><circle cx="4.900" cy="4.900" r="1.100"/><path d="M13.800 9.300l-3-3L3 13.800"/></svg>
    <div class="abs" id="chg" style="left:242px;top:21px;font-size:13.500px;font-weight:700;line-height:20px;color:#1f2937;letter-spacing:-.2px">Change</div>
    <svg class="abs" style="left:313px;top:22px" width="18" height="18" viewBox="0 0 18 18" fill="none" stroke="#7c3aed" stroke-width="1.500" stroke-linecap="round"><rect x="1.800" y="2" width="13.400" height="13.400" rx="1.600"/><path d="M8.500 5.800v5.800M5.600 8.700h5.800"/></svg>
    <div class="abs" style="left:327px;top:13px;width:18px;height:18px;border-radius:50%;background:#7c3aed;color:#fff;font-size:10.500px;font-weight:700;text-align:center;line-height:18px">4</div>
  </div>
  <svg class="abs" style="left:18px;top:77px" width="17" height="17" viewBox="0 0 17 17" fill="none" stroke="#4b5563" stroke-width="1.200" stroke-linecap="round"><circle cx="8.500" cy="8.500" r="7.500"/><path d="M8.500 5.500v6M5.500 8.500h6"/></svg>
  <div class="sect" id="s1" style="top:77px">Defect Type</div>
  <svg class="abs" style="left:325px;top:80px" width="14" height="10" viewBox="0 0 14 10" fill="none" stroke="#9ca3af" stroke-width="1.300" stroke-linecap="round" stroke-linejoin="round"><path d="M2.500 2.500L7 7l4.500-4.500"/></svg>
  <div class="chip" style="left:18px;top:109px;width:72.5px"><b style="background:#dc2626"></b>Scratch</div>
  <div class="chip" style="left:96px;top:109px;width:113.5px"><b style="background:#84cc16"></b>Contamination</div>
  <div class="chip" style="left:215px;top:109px;width:86px"><b style="background:#f97316"></b>Oxidation</div>
  <div class="chip" style="left:18px;top:144px;width:105.5px"><b style="background:#ec4899"></b>Discoloration</div>
  <div class="chip on" style="left:128px;top:144px;width:124px"><b style="background:#ef4444"></b>Missing Material</div>
  <div class="chip" style="left:18px;top:179px;width:107px"><b style="background:#7c3aed"></b>Solder Bridge</div>
  <div class="chip" style="left:130.5px;top:179px;width:125px"><b style="background:#7c3aed"></b>Cold Solder Joint</div>
  <div class="chip" style="left:18px;top:214px;width:87px"><b style="background:#dc2626"></b>Corrosion</div>
  <div class="chip" style="left:109.5px;top:214px;width:106px"><b style="background:#6366f1"></b>Delamination</div>
  <div class="chip" style="left:220px;top:214px;width:55.5px"><b style="background:#10b981"></b>Burr</div>
  <div class="chip" style="left:18px;top:249px;width:87.5px"><b style="background:#6d28d9"></b>Tool Mark</div>
  <div class="chip" style="left:110px;top:249px;width:81.5px"><b style="background:#a855f7"></b>Inclusion</div>
  <div class="chip" style="left:197px;top:249px;width:78.5px"><b style="background:#f472b6"></b>Warping</div>
  <div class="chip" style="left:18px;top:284px;width:69px"><b style="background:#7c3aed"></b>Pitting</div>
  <div class="chip" style="left:18px;top:377px;width:78.5px"><b style="background:#6b7280"></b>bent pin</div>
  <div class="chip" style="left:102px;top:377px;width:83px"><b style="background:#6b7280"></b>bent side</div>
  <div class="chip" style="left:190px;top:377px;width:112.5px"><b style="background:#9ca3af"></b>+ Add Custom</div>
  <div class="hline" style="top:328px"></div>
  <svg class="abs" style="left:18px;top:344px" width="18" height="18" viewBox="0 0 18 18" fill="none" stroke="#4b5563" stroke-width="1.200" stroke-linejoin="round"><path d="M9 1.700l2.300 4.700 5.100.7-3.700 3.600.9 5.100L9 13.400l-4.600 2.400.9-5.100L1.600 7.100l5.100-.7z"/></svg>
  <div class="sect" id="s2" style="top:345px;letter-spacing:-.45px">Custom Defects</div>
  <div class="abs" style="left:154px;top:346px;font-size:11px;line-height:16px;color:#6b7280">(2)</div>
  <svg class="abs" style="left:325px;top:348px" width="14" height="10" viewBox="0 0 14 10" fill="none" stroke="#9ca3af" stroke-width="1.300" stroke-linecap="round" stroke-linejoin="round"><path d="M2.500 2.500L7 7l4.500-4.500"/></svg>
  <div class="hline" style="top:421px"></div>
  <div class="num" style="top:444px;background:#ef4444">1</div><div class="xx" style="top:448px">×</div><div class="pl" style="top:444px">+</div>
  <div class="sel" style="top:441px">Contamination<svg class="abs" style="right:6px;top:7px" width="12" height="9" viewBox="0 0 12 9" fill="none" stroke="#111" stroke-width="2" stroke-linecap="round" stroke-linejoin="round"><path d="M1.500 1.800L6 6.300l4.500-4.500"/></svg></div>
  <div class="num" style="top:484px;background:#f97316">2</div><div class="xx" style="top:488px">×</div><div class="pl" style="top:484px">+</div>
  <div class="sel" style="top:481px">Scratch<svg class="abs" style="right:6px;top:7px" width="12" height="9" viewBox="0 0 12 9" fill="none" stroke="#111" stroke-width="2" stroke-linecap="round" stroke-linejoin="round"><path d="M1.500 1.800L6 6.300l4.500-4.500"/></svg></div>
  <div id="rpf">
    <div class="abs" style="left:18px;top:18px;width:323px;height:33px;border-radius:6px;background:#e5e7eb"></div>
    <div class="abs" style="left:20px;top:21px;width:158px;height:28px;border-radius:4px;background:linear-gradient(90deg,#7c3aed,#8b3cf0);color:#fff;font-size:12px;font-weight:700;text-align:center;line-height:28px">OV10i/OV20i</div>
    <div class="abs" style="left:178px;top:21px;width:162px;height:28px;color:#6b7280;font-size:12px;text-align:center;line-height:28px">OV80i</div>
    <div class="abs" style="left:18px;top:60px;width:323px;height:52px;border-radius:8px;background:linear-gradient(100deg,#7c3aed 0%,#5b3fe6 55%,#4f46e5 100%);box-shadow:0 2px 6px rgba(79,70,229,.3)"></div>
    <svg class="abs" style="left:132px;top:75px" width="20" height="22" viewBox="0 0 20 22" fill="none" stroke="#fff" stroke-width="1.600" stroke-linejoin="round"><path d="M11.500 1.500L2.500 12.500h6.500l-1.500 8 9.500-11.500h-6.700z"/></svg>
    <div class="abs" id="gen" style="left:162px;top:76px;color:#fff;font-size:15.500px;font-weight:700;line-height:20px;letter-spacing:-.2px">Generate</div>
  </div>
</div>
</div>
</body>
</html>
